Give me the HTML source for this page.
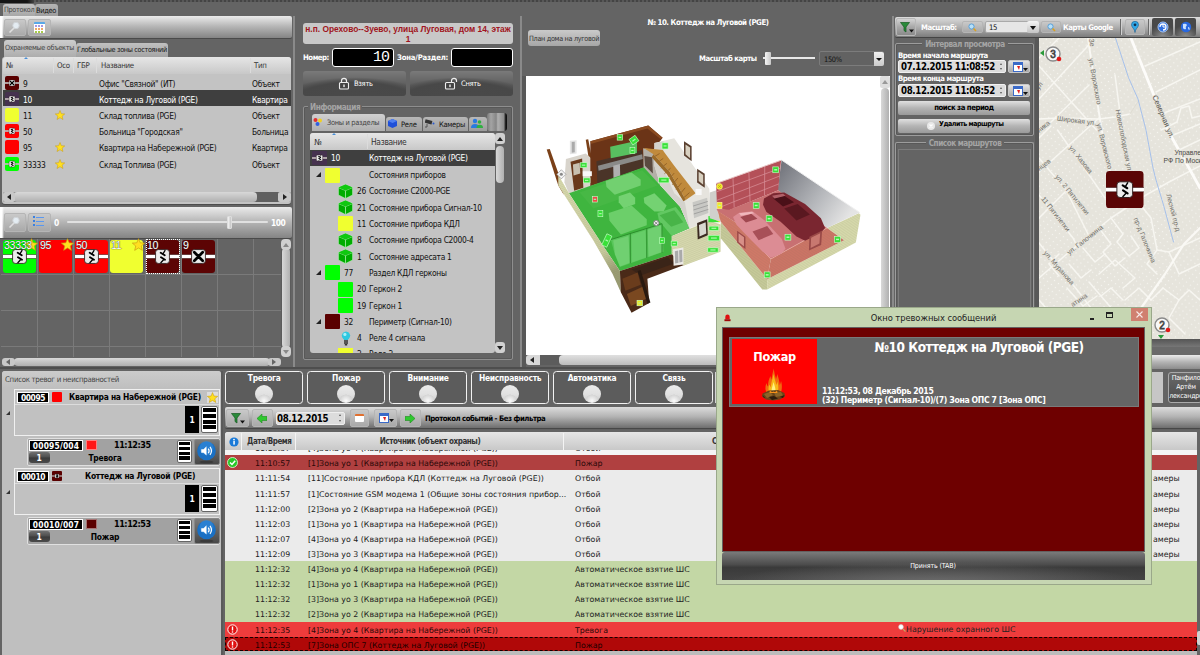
<!DOCTYPE html>
<html lang="ru"><head><meta charset="utf-8"><title>АРМ</title>
<style>
*{box-sizing:border-box;margin:0;padding:0}
html,body{width:1200px;height:655px;overflow:hidden;background:#646464}
body{position:relative;font:8.4px "DejaVu Sans Condensed","Liberation Sans",sans-serif;letter-spacing:-.3px;color:#111;line-height:1}
.a{position:absolute;white-space:nowrap}
.b{font-weight:bold;letter-spacing:-.45px}
.w{color:#fff}
.bs{font-size:7.7px}
.vd{font:7.85px "DejaVu Sans","Liberation Sans",sans-serif;letter-spacing:0}
.ar{font-family:"Liberation Sans",sans-serif;letter-spacing:0}
.btn{border:1px solid #b5b5b5;border-radius:2px;background:linear-gradient(#c9c9c9,#a9a9a9)}
.dk{background:linear-gradient(#707070,#4d4d4d 48%,#3a3a3a 52%,#4a4a4a);border-radius:3px}
.th{border-radius:3px 3px 0 0}
.lt{background:linear-gradient(#ececec,#b9b9b9 50%,#8a8a8a)}
.hd{background:linear-gradient(#e6e6e6,#c8c8c8)}
.sbh{background:linear-gradient(#d8d8d8,#b0b0b0);border-radius:4px}
.sbv{background:linear-gradient(90deg,#d8d8d8,#b0b0b0);border-radius:4px}
</style></head><body>
<div class="a " style="left:0px;top:0px;width:1200px;height:2px;background:repeating-linear-gradient(90deg,#444 0 2px,#585858 2px 4px)"></div>
<div class="a " style="left:0px;top:0px;width:34px;height:3px;background:linear-gradient(90deg,#151515 80%,#444)"></div>
<div class="a th" style="left:3px;top:4px;width:32px;height:13px;background:linear-gradient(#c4c4c4,#a4a4a4)"></div>
<div class="a " style="left:4px;top:6px;color:#444;font-size:7.2px">Протокол</div>
<div class="a th" style="left:35px;top:4px;width:23px;height:13px;background:linear-gradient(#b4b4b4,#9c9c9c)"></div>
<div class="a " style="left:36px;top:7px;font-size:7.4px">Видео</div>
<div class="a " style="left:0px;top:16px;width:292px;height:22px;background:linear-gradient(90deg,#fff 0,#fff 2px,rgba(255,255,255,0) 4px),linear-gradient(#ebebeb,#b5b5b5 48%,#848484);border-radius:0 2px 2px 0;box-shadow:0 1px 0 #4a4a4a"></div>
<div class="a btn" style="left:4px;top:19px;width:22px;height:17px;"></div>
<div class="a btn" style="left:28px;top:19px;width:23px;height:17px;"></div>
<svg class="a" style="left:8px;top:21px" width="13" height="13" viewBox="0 0 13 13"><path d="M6 7 L1.5 11.5" stroke="#e0e0e0" stroke-width="1.6"/><circle cx="8" cy="4.5" r="3.2" fill="#e4ecf2" stroke="#d0d4d8" stroke-width="1"/></svg>
<div class="a " style="left:34px;top:22px;width:11px;height:11px;background:#fff;border-top:2px solid #58a8e8;border-radius:1px"><div style="margin:1px 1px 0;height:2px;background:repeating-linear-gradient(90deg,#a898e0 0 2px,#fff 2px 3px)"></div><div style="margin:1px 1px 0;height:2px;background:repeating-linear-gradient(90deg,#f0a868 0 2px,#fff 2px 3px)"></div><div style="margin:1px 1px 0;height:2px;background:repeating-linear-gradient(90deg,#a8cc48 0 2px,#fff 2px 3px)"></div></div>
<div class="a th" style="left:4px;top:40px;width:72px;height:17px;background:linear-gradient(#cdcdcd,#adadad)"></div>
<div class="a " style="left:5px;top:44px;color:#444;font-size:7.2px">Охраняемые объекты</div>
<div class="a th" style="left:76px;top:43px;width:92px;height:14px;background:linear-gradient(#c0c0c0,#a4a4a4)"></div>
<div class="a " style="left:77px;top:46px;font-size:7.2px">Глобальные зоны состояний</div>
<div class="a " style="left:2px;top:57px;width:289px;height:147px;background:#c3c3c3;border-radius:3px;box-shadow:0 1px 0 #4c4c4c"></div>
<div class="a hd" style="left:3px;top:57px;width:288px;height:17px;border-radius:3px 3px 0 0"></div>
<div class="a " style="left:53px;top:58px;width:1px;height:15px;background:#dcdcdc"></div>
<div class="a " style="left:73px;top:58px;width:1px;height:15px;background:#dcdcdc"></div>
<div class="a " style="left:96px;top:58px;width:1px;height:15px;background:#dcdcdc"></div>
<div class="a " style="left:250px;top:58px;width:1px;height:15px;background:#dcdcdc"></div>
<div class="a " style="left:6px;top:62px;color:#333;font-size:7.8px">№</div>
<div class="a " style="left:57px;top:62px;color:#333;font-size:7.8px">Осо</div>
<div class="a " style="left:77px;top:62px;color:#333;font-size:7.8px">ГБР</div>
<div class="a " style="left:101px;top:62px;color:#333;font-size:7.8px">Название</div>
<div class="a " style="left:254px;top:62px;color:#333;font-size:7.8px">Тип</div>
<div class="a " style="left:24px;top:57px;width:0px;height:0px;border:2px solid transparent;border-bottom:2px solid #4a90d8;border-top:0"></div>
<div class="a " style="left:3px;top:90.4px;width:288px;height:16px;background:#3f3f3f"></div>
<svg class="a" style="left:5px;top:76px" width="14" height="14" viewBox="0 0 14 14"><rect width="14" height="14" rx="2" fill="#5a0000"/><rect x="-1" y="6.19" width="16" height="1.62" fill="#fff" stroke="rgba(40,0,0,.7)" stroke-width="0.35"/><rect x="4.06" y="4.06" width="5.88" height="5.88" rx="1.18" fill="#ececec" stroke="#2a1a1a" stroke-width="0.40"/><path d="M5.24 5.24 L8.76 8.76 M8.76 5.24 L5.24 8.76" stroke="#000" stroke-width="1.18" stroke-linecap="round"/></svg>
<div class="a " style="left:23px;top:80px;">9</div>
<div class="a " style="left:99px;top:80px;">Офис "Связной" (ИТ)</div>
<div class="a " style="left:252px;top:80px;">Объект</div>
<svg class="a" style="left:5px;top:92px" width="14" height="14" viewBox="0 0 14 14"><rect width="14" height="14" rx="2" fill="#46324f"/><rect x="-1" y="6.19" width="16" height="1.62" fill="#fff" stroke="rgba(40,0,0,.7)" stroke-width="0.35"/><rect x="4.06" y="4.06" width="5.88" height="5.88" rx="1.18" fill="#ececec" stroke="#2a1a1a" stroke-width="0.40"/><path d="M8.18 4.30 L7.06 6.12 M7.65 8.18 L6.18 9.76" fill="none" stroke="#000" stroke-width="0.70"/><path d="M6.24 5.41 L7.94 6.47 M6.35 7.29 L8.06 8.41" fill="none" stroke="#000" stroke-width="1.05" stroke-linecap="round"/></svg>
<div class="a " style="left:23px;top:96px;color:#fff">10</div>
<div class="a " style="left:99px;top:96px;color:#fff">Коттедж на Луговой (PGE)</div>
<div class="a " style="left:252px;top:96px;color:#fff">Квартира</div>
<svg class="a" style="left:5px;top:108px" width="14" height="14" viewBox="0 0 14 14"><rect width="14" height="14" rx="2" fill="#f0ff30"/></svg>
<div class="a " style="left:23px;top:112px;">11</div>
<svg class="a" style="left:55px;top:110px" width="10" height="10" viewBox="0 0 20 20"><path d="M10 1 L12.6 7.4 L19.5 7.9 L14.2 12.3 L15.9 19 L10 15.3 L4.1 19 L5.8 12.3 L0.5 7.9 L7.4 7.4 Z" fill="#ffe020" stroke="#c89a10" stroke-width="1"/></svg>
<div class="a " style="left:99px;top:112px;">Склад топлива (PGE)</div>
<div class="a " style="left:252px;top:112px;">Объект</div>
<svg class="a" style="left:5px;top:124px" width="14" height="14" viewBox="0 0 14 14"><rect width="14" height="14" rx="2" fill="#ff0000"/><rect x="-1" y="6.19" width="16" height="1.62" fill="#fff" stroke="rgba(40,0,0,.7)" stroke-width="0.35"/><rect x="4.06" y="4.06" width="5.88" height="5.88" rx="1.18" fill="#ececec" stroke="#2a1a1a" stroke-width="0.40"/><path d="M8.18 4.30 L7.06 6.12 M7.65 8.18 L6.18 9.76" fill="none" stroke="#000" stroke-width="0.70"/><path d="M6.24 5.41 L7.94 6.47 M6.35 7.29 L8.06 8.41" fill="none" stroke="#000" stroke-width="1.05" stroke-linecap="round"/></svg>
<div class="a " style="left:23px;top:128px;">50</div>
<div class="a " style="left:99px;top:128px;">Больница "Городская"</div>
<div class="a " style="left:252px;top:128px;">Больница</div>
<svg class="a" style="left:5px;top:140px" width="14" height="14" viewBox="0 0 14 14"><rect width="14" height="14" rx="2" fill="#ff0000"/></svg>
<div class="a " style="left:23px;top:144px;">95</div>
<svg class="a" style="left:55px;top:142px" width="10" height="10" viewBox="0 0 20 20"><path d="M10 1 L12.6 7.4 L19.5 7.9 L14.2 12.3 L15.9 19 L10 15.3 L4.1 19 L5.8 12.3 L0.5 7.9 L7.4 7.4 Z" fill="#ffe020" stroke="#c89a10" stroke-width="1"/></svg>
<div class="a " style="left:99px;top:144px;">Квартира на Набережной (PGE)</div>
<div class="a " style="left:252px;top:144px;">Квартира</div>
<svg class="a" style="left:5px;top:157px" width="14" height="14" viewBox="0 0 14 14"><rect width="14" height="14" rx="2" fill="#00ff00"/><rect x="-1" y="6.19" width="16" height="1.62" fill="#fff" stroke="rgba(40,0,0,.7)" stroke-width="0.35"/><rect x="4.06" y="4.06" width="5.88" height="5.88" rx="1.18" fill="#ececec" stroke="#2a1a1a" stroke-width="0.40"/><path d="M8.18 4.30 L7.06 6.12 M7.65 8.18 L6.18 9.76" fill="none" stroke="#000" stroke-width="0.70"/><path d="M6.24 5.41 L7.94 6.47 M6.35 7.29 L8.06 8.41" fill="none" stroke="#000" stroke-width="1.05" stroke-linecap="round"/></svg>
<div class="a " style="left:23px;top:161px;">33333</div>
<svg class="a" style="left:55px;top:159px" width="10" height="10" viewBox="0 0 20 20"><path d="M10 1 L12.6 7.4 L19.5 7.9 L14.2 12.3 L15.9 19 L10 15.3 L4.1 19 L5.8 12.3 L0.5 7.9 L7.4 7.4 Z" fill="#ffe020" stroke="#c89a10" stroke-width="1"/></svg>
<div class="a " style="left:99px;top:161px;">Склад Топлива (PGE)</div>
<div class="a " style="left:252px;top:161px;">Объект</div>
<div class="a " style="left:3px;top:192px;width:288px;height:10px;background:#606060;border-radius:2px"></div>
<div class="a sbh" style="left:13px;top:192px;width:244px;height:10px;"></div>
<div class="a " style="left:3px;top:192px;width:12px;height:10px;background:#c8c8c8;border-radius:2px"></div>
<div class="a " style="left:278px;top:192px;width:13px;height:10px;background:#c8c8c8;border-radius:2px"></div>
<div class="a " style="left:7px;top:194px;width:0px;height:0px;border:3px solid transparent;border-right:4px solid #222;border-left:0"></div>
<div class="a " style="left:283px;top:194px;width:0px;height:0px;border:3px solid transparent;border-left:4px solid #222;border-right:0"></div>
<div class="a " style="left:0px;top:207px;width:292px;height:31px;background:linear-gradient(90deg,#fff 0,#fff 2px,rgba(255,255,255,0) 4px),linear-gradient(#ebebeb,#b5b5b5 48%,#848484);border-radius:0 2px 2px 0;box-shadow:0 1px 0 #4a4a4a"></div>
<div class="a btn" style="left:4px;top:213px;width:22px;height:19px;"></div>
<div class="a btn" style="left:28px;top:213px;width:23px;height:19px;"></div>
<svg class="a" style="left:8px;top:216px" width="13" height="13" viewBox="0 0 13 13"><path d="M6 7 L1.5 11.5" stroke="#e0e0e0" stroke-width="1.6"/><circle cx="8" cy="4.5" r="3.2" fill="#e4ecf2" stroke="#d0d4d8" stroke-width="1"/></svg>
<div class="a " style="left:33px;top:216px;width:2px;height:2px;background:#3a80e0"></div>
<div class="a " style="left:36px;top:216.5px;width:8px;height:1.5px;background:#5a98f0"></div>
<div class="a " style="left:33px;top:220px;width:2px;height:2px;background:#3a80e0"></div>
<div class="a " style="left:36px;top:220.5px;width:8px;height:1.5px;background:#5a98f0"></div>
<div class="a " style="left:33px;top:224px;width:2px;height:2px;background:#3a80e0"></div>
<div class="a " style="left:36px;top:224.5px;width:8px;height:1.5px;background:#5a98f0"></div>
<div class="a b" style="left:54px;top:219px;color:#fff">0</div>
<div class="a " style="left:67px;top:221px;width:201px;height:2px;background:#e0e0e0;border-radius:1px"></div>
<div class="a " style="left:227px;top:216px;width:5px;height:13px;background:linear-gradient(90deg,#f4f4f4,#c4c4c4);border-radius:1px;border:1px solid #ddd"></div>
<div class="a b" style="left:271px;top:219px;color:#fff">100</div>
<div class="a " style="left:37px;top:239px;width:1px;height:118px;background:#7a7a7a"></div>
<div class="a " style="left:73px;top:239px;width:1px;height:118px;background:#7a7a7a"></div>
<div class="a " style="left:109px;top:239px;width:1px;height:118px;background:#7a7a7a"></div>
<div class="a " style="left:145px;top:239px;width:1px;height:118px;background:#7a7a7a"></div>
<div class="a " style="left:181px;top:239px;width:1px;height:118px;background:#7a7a7a"></div>
<div class="a " style="left:217px;top:239px;width:1px;height:118px;background:#7a7a7a"></div>
<div class="a " style="left:253px;top:239px;width:1px;height:118px;background:#7a7a7a"></div>
<div class="a " style="left:1px;top:274px;width:280px;height:1px;background:#7a7a7a"></div>
<div class="a " style="left:1px;top:310px;width:280px;height:1px;background:#7a7a7a"></div>
<div class="a " style="left:1px;top:346px;width:280px;height:1px;background:#7a7a7a"></div>
<svg class="a" style="left:3px;top:240px" width="33" height="33" viewBox="0 0 33 33"><rect width="33" height="33" rx="3" fill="#00ff00"/><rect x="-1" y="14.59" width="35" height="3.83" fill="#fff" stroke="rgba(40,0,0,.7)" stroke-width="0.66"/><rect x="9.57" y="9.57" width="13.86" height="13.86" rx="2.77" fill="#ececec" stroke="#2a1a1a" stroke-width="0.83"/><path d="M19.27 10.12 L16.64 14.42 M18.02 19.27 L14.56 23.01" fill="none" stroke="#000" stroke-width="1.25"/><path d="M14.70 12.76 L18.72 15.25 M14.98 17.19 L18.99 19.83" fill="none" stroke="#000" stroke-width="1.87" stroke-linecap="round"/></svg>
<svg class="a" style="left:25px;top:238px" width="13" height="13" viewBox="0 0 20 20"><path d="M10 1 L12.6 7.4 L19.5 7.9 L14.2 12.3 L15.9 19 L10 15.3 L4.1 19 L5.8 12.3 L0.5 7.9 L7.4 7.4 Z" fill="#ffe020" stroke="#c89a10" stroke-width="1"/></svg>
<div class="a ar" style="left:4px;top:240px;color:#fff;font-size:10.6px;letter-spacing:-.3px;text-shadow:0 0 1px #333,0 0 1px #333">33333</div>
<svg class="a" style="left:39px;top:240px" width="33" height="33" viewBox="0 0 33 33"><rect width="33" height="33" rx="3" fill="#ff0000"/></svg>
<svg class="a" style="left:61px;top:238px" width="13" height="13" viewBox="0 0 20 20"><path d="M10 1 L12.6 7.4 L19.5 7.9 L14.2 12.3 L15.9 19 L10 15.3 L4.1 19 L5.8 12.3 L0.5 7.9 L7.4 7.4 Z" fill="#ffe020" stroke="#c89a10" stroke-width="1"/></svg>
<div class="a ar" style="left:40px;top:240px;color:#fff;font-size:10.6px;letter-spacing:-.3px;text-shadow:0 0 1px #333,0 0 1px #333">95</div>
<svg class="a" style="left:75px;top:240px" width="33" height="33" viewBox="0 0 33 33"><rect width="33" height="33" rx="3" fill="#ff0000"/><rect x="-1" y="14.59" width="35" height="3.83" fill="#fff" stroke="rgba(40,0,0,.7)" stroke-width="0.66"/><rect x="9.57" y="9.57" width="13.86" height="13.86" rx="2.77" fill="#ececec" stroke="#2a1a1a" stroke-width="0.83"/><path d="M19.27 10.12 L16.64 14.42 M18.02 19.27 L14.56 23.01" fill="none" stroke="#000" stroke-width="1.25"/><path d="M14.70 12.76 L18.72 15.25 M14.98 17.19 L18.99 19.83" fill="none" stroke="#000" stroke-width="1.87" stroke-linecap="round"/></svg>
<div class="a ar" style="left:76px;top:240px;color:#fff;font-size:10.6px;letter-spacing:-.3px;text-shadow:0 0 1px #333,0 0 1px #333">50</div>
<svg class="a" style="left:110px;top:240px" width="33" height="33" viewBox="0 0 33 33"><rect width="33" height="33" rx="3" fill="#f0ff30"/></svg>
<svg class="a" style="left:132px;top:238px" width="13" height="13" viewBox="0 0 20 20"><path d="M10 1 L12.6 7.4 L19.5 7.9 L14.2 12.3 L15.9 19 L10 15.3 L4.1 19 L5.8 12.3 L0.5 7.9 L7.4 7.4 Z" fill="#ffe020" stroke="#c89a10" stroke-width="1"/></svg>
<div class="a ar" style="left:111px;top:240px;color:#fff;font-size:10.6px;letter-spacing:-.3px;text-shadow:0 0 1px #333,0 0 1px #333">11</div>
<svg class="a" style="left:146px;top:240px" width="33" height="33" viewBox="0 0 33 33"><rect width="33" height="33" rx="3" fill="#5c0404"/><rect x="-1" y="14.59" width="35" height="3.83" fill="#fff" stroke="rgba(40,0,0,.7)" stroke-width="0.66"/><rect x="9.57" y="9.57" width="13.86" height="13.86" rx="2.77" fill="#ececec" stroke="#2a1a1a" stroke-width="0.83"/><path d="M19.27 10.12 L16.64 14.42 M18.02 19.27 L14.56 23.01" fill="none" stroke="#000" stroke-width="1.25"/><path d="M14.70 12.76 L18.72 15.25 M14.98 17.19 L18.99 19.83" fill="none" stroke="#000" stroke-width="1.87" stroke-linecap="round"/></svg>
<div class="a ar" style="left:147px;top:240px;color:#fff;font-size:10.6px;letter-spacing:-.3px;text-shadow:0 0 1px #333,0 0 1px #333">10</div>
<svg class="a" style="left:182px;top:240px" width="33" height="33" viewBox="0 0 33 33"><rect width="33" height="33" rx="3" fill="#5c0404"/><rect x="-1" y="14.59" width="35" height="3.83" fill="#fff" stroke="rgba(40,0,0,.7)" stroke-width="0.66"/><rect x="9.57" y="9.57" width="13.86" height="13.86" rx="2.77" fill="#ececec" stroke="#2a1a1a" stroke-width="0.83"/><path d="M12.34 12.34 L20.66 20.66 M20.66 12.34 L12.34 20.66" stroke="#000" stroke-width="2.77" stroke-linecap="round"/></svg>
<div class="a ar" style="left:183px;top:240px;color:#fff;font-size:10.6px;letter-spacing:-.3px;text-shadow:0 0 1px #333,0 0 1px #333">9</div>
<div class="a " style="left:146px;top:239px;width:34px;height:35px;border:1px dotted #fff"></div>
<div class="a " style="left:281px;top:239px;width:10px;height:118px;background:#5c5c5c;border-radius:4px"></div>
<div class="a sbv" style="left:282px;top:248px;width:8px;height:100px;"></div>
<div class="a " style="left:281px;top:239px;width:10px;height:11px;background:#d0d0d0;border-radius:4px"></div>
<div class="a " style="left:281px;top:346px;width:10px;height:11px;background:#d0d0d0;border-radius:4px"></div>
<div class="a " style="left:283px;top:243px;width:0px;height:0px;border:3px solid transparent;border-bottom:4px solid #888;border-top:0"></div>
<div class="a " style="left:283px;top:350px;width:0px;height:0px;border:3px solid transparent;border-top:4px solid #888;border-bottom:0"></div>
<div class="a " style="left:2px;top:358px;width:279px;height:8px;background:#5c5c5c;border-radius:3px"></div>
<div class="a sbh" style="left:14px;top:358px;width:256px;height:8px;"></div>
<div class="a " style="left:2px;top:358px;width:13px;height:8px;background:#c8c8c8;border-radius:3px"></div>
<div class="a " style="left:268px;top:358px;width:13px;height:8px;background:#c8c8c8;border-radius:3px"></div>
<div class="a " style="left:6px;top:359px;width:0px;height:0px;border:3px solid transparent;border-right:4px solid #666;border-left:0"></div>
<div class="a " style="left:272px;top:359px;width:0px;height:0px;border:3px solid transparent;border-left:4px solid #666;border-right:0"></div>
<div class="a " style="left:293px;top:16px;width:2px;height:351px;background:#8a8a8a"></div>
<div class="a " style="left:303px;top:23px;width:210px;height:21px;background:#c8c8c8;border-radius:3px"></div>
<div class="a ar" style="left:258px;width:300px;text-align:center;top:25px;color:#a01420;font-weight:bold;font-size:8.4px">н.п. Орехово--Зуево, улица Луговая, дом 14, этаж</div>
<div class="a ar" style="left:258px;width:300px;text-align:center;top:35px;color:#a01420;font-weight:bold;font-size:8.4px">1</div>
<div class="a b w bs" style="left:303px;top:54px;">Номер:</div>
<div class="a " style="left:332px;top:48px;width:62px;height:19px;background:#000;border:1px solid #fff;border-radius:3px"></div>
<div class="a " style="left:373px;top:49px;color:#fff;font:15px Liberation Mono,monospace;letter-spacing:-1px">10</div>
<div class="a b w bs" style="left:397px;top:54px;letter-spacing:-.2px">Зона/Раздел:</div>
<div class="a " style="left:451px;top:48px;width:62px;height:19px;background:#000;border:1px solid #fff;border-radius:3px"></div>
<div class="a " style="left:303px;top:71px;width:103px;height:25px;background:radial-gradient(ellipse 75% 100% at 50% 125%,#4a4a4a 0,#484848 80%,rgba(72,72,72,0) 100%),linear-gradient(#7a7a7a,#5c5c5c 60%,#505050);border-radius:3px"></div>
<div class="a " style="left:410px;top:71px;width:103px;height:25px;background:radial-gradient(ellipse 75% 100% at 50% 125%,#4a4a4a 0,#484848 80%,rgba(72,72,72,0) 100%),linear-gradient(#7a7a7a,#5c5c5c 60%,#505050);border-radius:3px"></div>
<svg class="a" style="left:338px;top:77px" width="12" height="13" viewBox="0 0 12 13"><path d="M3.5 6 V3.8 a2.5 2.5 0 0 1 5 0 V6" fill="none" stroke="#eee" stroke-width="1.2"/><rect x="1.5" y="5.5" width="9" height="6.5" rx="1" fill="#444" stroke="#eee" stroke-width="1.1"/><rect x="5.3" y="7.5" width="1.4" height="2.6" fill="#eee"/></svg>
<svg class="a" style="left:444px;top:77px" width="14" height="13" viewBox="0 0 14 13"><path d="M7.5 6 V3.8 a2.5 2.5 0 0 1 5 0 V5" fill="none" stroke="#eee" stroke-width="1.2"/><rect x="1.5" y="5.5" width="9" height="6.5" rx="1" fill="#444" stroke="#eee" stroke-width="1.1"/><rect x="5.3" y="7.5" width="1.4" height="2.6" fill="#eee"/></svg>
<div class="a " style="left:354px;top:80px;color:#fff;font-size:7.5px">Взять</div>
<div class="a " style="left:461px;top:80px;color:#fff;font-size:7.5px">Снять</div>
<div class="a " style="left:303px;top:106px;width:210px;height:254px;border:1px solid #8e8e8e;border-radius:2px;box-shadow:inset 0 0 0 1px #585858"></div>
<div class="a " style="left:308px;top:102px;width:54px;height:9px;background:#646464"></div>
<div class="a b" style="left:310px;top:103px;color:#a4a4a4;font-size:8.1px">Информация</div>
<div class="a th" style="left:312px;top:114px;width:73px;height:17px;background:linear-gradient(#d0d0d0,#b0b0b0)"></div>
<div class="a th" style="left:386px;top:117px;width:36px;height:14px;background:linear-gradient(#b8b8b8,#9c9c9c)"></div>
<div class="a th" style="left:423px;top:117px;width:45px;height:14px;background:linear-gradient(#b8b8b8,#9c9c9c)"></div>
<div class="a th" style="left:469px;top:117px;width:18px;height:14px;background:linear-gradient(#b8b8b8,#9c9c9c)"></div>
<div class="a " style="left:327px;top:119px;color:#444;font-size:7.4px">Зоны и разделы</div>
<div class="a " style="left:401px;top:121px;color:#111;font-size:7.5px">Реле</div>
<div class="a " style="left:439px;top:121px;color:#111;font-size:7.5px">Камеры</div>
<svg class="a" style="left:313px;top:117px" width="10" height="10" viewBox="0 0 10 10"><circle cx="2.5" cy="3" r="2" fill="#e03030"/><circle cx="7" cy="3.5" r="2" fill="#f0d020"/><circle cx="4.5" cy="7" r="2" fill="#3060e0"/></svg>
<svg class="a" style="left:388px;top:119px" width="9" height="9" viewBox="0 0 9 9"><path d="M4.5 0 L9 2 V7 L4.5 9 L0 7 V2Z" fill="#2050d8"/><path d="M4.5 0 L9 2 L4.5 4 L0 2Z" fill="#5080f0"/></svg>
<svg class="a" style="left:425px;top:119px" width="10" height="9" viewBox="0 0 10 9"><rect x="0" y="1" width="7" height="3.5" fill="#333" transform="rotate(15 3 3)"/><path d="M2 5 V8 H0" stroke="#555" fill="none"/><circle cx="8.5" cy="4.5" r="1" fill="#2a5ad0"/></svg>
<svg class="a" style="left:471px;top:118px" width="12" height="11" viewBox="0 0 12 11"><circle cx="4" cy="3" r="2.2" fill="#2a7ae0"/><path d="M0 10 a4 4 0 0 1 8 0Z" fill="#2a7ae0"/><circle cx="8.5" cy="4" r="1.8" fill="#30b040"/><path d="M5.5 10 a3 3 0 0 1 6.5 0Z" fill="#30b040"/></svg>
<div class="a " style="left:487px;top:113px;width:20px;height:18px;background:linear-gradient(90deg,#7a7a7a,#a4a4a4 20%,#868686 46%,#b0b0b0 54%,#8c8c8c 84%,#111 94%);border-radius:3px"></div>
<div class="a " style="left:310px;top:133px;width:185px;height:220px;background:#c3c3c3;border-radius:3px"></div>
<div class="a hd" style="left:310px;top:133px;width:185px;height:17px;border-radius:3px 3px 0 0"></div>
<div class="a " style="left:367px;top:134px;width:1px;height:15px;background:#dcdcdc"></div>
<div class="a " style="left:332px;top:133px;width:0px;height:0px;border:2px solid transparent;border-bottom:2px solid #4a90d8;border-top:0"></div>
<div class="a " style="left:314px;top:138px;color:#333">№</div>
<div class="a " style="left:371px;top:138px;color:#333">Название</div>
<div class="a " style="left:310px;top:150px;width:185px;height:16px;background:#3f3f3f"></div>
<svg class="a" style="left:312px;top:151px" width="15" height="14" viewBox="0 0 15 14"><rect width="15" height="14" rx="1" fill="#46324f"/><rect x="-1" y="6.19" width="17" height="1.62" fill="#fff" stroke="rgba(40,0,0,.7)" stroke-width="0.35"/><rect x="4.35" y="4.06" width="6.30" height="5.88" rx="1.26" fill="#ececec" stroke="#2a1a1a" stroke-width="0.40"/><path d="M8.76 4.30 L7.56 6.12 M8.19 8.18 L6.62 9.76" fill="none" stroke="#000" stroke-width="0.70"/><path d="M6.68 5.41 L8.51 6.47 M6.81 7.29 L8.63 8.41" fill="none" stroke="#000" stroke-width="1.05" stroke-linecap="round"/></svg>
<div class="a " style="left:331px;top:154px;color:#fff">10</div>
<div class="a " style="left:369px;top:154px;color:#fff">Коттедж на Луговой (PGE)</div>
<svg class="a" style="left:316px;top:172px" width="5" height="5" viewBox="0 0 5 5"><path d="M5 0 V5 H0Z" fill="#222"/></svg>
<div class="a " style="left:325px;top:168px;width:15px;height:15px;background:#f0ff30;border-radius:1px"></div>
<div class="a " style="left:344px;top:171px;"></div>
<div class="a " style="left:369px;top:171px;">Состояния приборов</div>
<svg class="a" style="left:338px;top:184px" width="15" height="15" viewBox="0 0 15 15"><path d="M7.5 0.5 L14.5 3.5 V11 L7.5 14.5 L0.5 11 V3.5Z" fill="#00ac00" stroke="#b8f0b8" stroke-width=".5"/><path d="M0.5 3.5 L7.5 6.5 L14.5 3.5 M7.5 6.5 V14.5" fill="none" stroke="#c8f8c8" stroke-width=".7"/><path d="M7.5 0.5 L14.5 3.5 L7.5 6.5 L0.5 3.5Z" fill="#10c810"/></svg>
<div class="a " style="left:357px;top:187px;">26</div>
<div class="a " style="left:369px;top:187px;">Состояние С2000-PGE</div>
<svg class="a" style="left:338px;top:200px" width="15" height="15" viewBox="0 0 15 15"><path d="M7.5 0.5 L14.5 3.5 V11 L7.5 14.5 L0.5 11 V3.5Z" fill="#00ac00" stroke="#b8f0b8" stroke-width=".5"/><path d="M0.5 3.5 L7.5 6.5 L14.5 3.5 M7.5 6.5 V14.5" fill="none" stroke="#c8f8c8" stroke-width=".7"/><path d="M7.5 0.5 L14.5 3.5 L7.5 6.5 L0.5 3.5Z" fill="#10c810"/></svg>
<div class="a " style="left:357px;top:204px;">21</div>
<div class="a " style="left:369px;top:204px;">Состояние прибора Сигнал-10</div>
<div class="a " style="left:338px;top:216px;width:15px;height:15px;background:#f0ff30;border-radius:1px"></div>
<div class="a " style="left:357px;top:220px;">11</div>
<div class="a " style="left:369px;top:220px;">Состояние прибора КДЛ</div>
<svg class="a" style="left:338px;top:233px" width="15" height="15" viewBox="0 0 15 15"><path d="M7.5 0.5 L14.5 3.5 V11 L7.5 14.5 L0.5 11 V3.5Z" fill="#00ac00" stroke="#b8f0b8" stroke-width=".5"/><path d="M0.5 3.5 L7.5 6.5 L14.5 3.5 M7.5 6.5 V14.5" fill="none" stroke="#c8f8c8" stroke-width=".7"/><path d="M7.5 0.5 L14.5 3.5 L7.5 6.5 L0.5 3.5Z" fill="#10c810"/></svg>
<div class="a " style="left:357px;top:236px;">8</div>
<div class="a " style="left:369px;top:236px;">Состояние прибора С2000-4</div>
<svg class="a" style="left:338px;top:249px" width="15" height="15" viewBox="0 0 15 15"><path d="M7.5 0.5 L14.5 3.5 V11 L7.5 14.5 L0.5 11 V3.5Z" fill="#00ac00" stroke="#b8f0b8" stroke-width=".5"/><path d="M0.5 3.5 L7.5 6.5 L14.5 3.5 M7.5 6.5 V14.5" fill="none" stroke="#c8f8c8" stroke-width=".7"/><path d="M7.5 0.5 L14.5 3.5 L7.5 6.5 L0.5 3.5Z" fill="#10c810"/></svg>
<div class="a " style="left:357px;top:253px;">1</div>
<div class="a " style="left:369px;top:253px;">Состояние  адресата 1</div>
<svg class="a" style="left:316px;top:270px" width="5" height="5" viewBox="0 0 5 5"><path d="M5 0 V5 H0Z" fill="#222"/></svg>
<div class="a " style="left:325px;top:265px;width:15px;height:15px;background:#00ff00;border-radius:1px"></div>
<div class="a " style="left:344px;top:269px;">77</div>
<div class="a " style="left:369px;top:269px;">Раздел КДЛ герконы</div>
<div class="a " style="left:338px;top:282px;width:15px;height:15px;background:#00ff00;border-radius:1px"></div>
<div class="a " style="left:357px;top:285px;">20</div>
<div class="a " style="left:369px;top:285px;">Геркон 2</div>
<div class="a " style="left:338px;top:298px;width:15px;height:15px;background:#00ff00;border-radius:1px"></div>
<div class="a " style="left:357px;top:302px;">19</div>
<div class="a " style="left:369px;top:302px;">Геркон 1</div>
<svg class="a" style="left:316px;top:319px" width="5" height="5" viewBox="0 0 5 5"><path d="M5 0 V5 H0Z" fill="#222"/></svg>
<div class="a " style="left:325px;top:314px;width:15px;height:15px;background:#5a0000;border-radius:1px"></div>
<div class="a " style="left:344px;top:318px;">32</div>
<div class="a " style="left:369px;top:318px;">Периметр (Сигнал-10)</div>
<svg class="a" style="left:341px;top:331px" width="10" height="15" viewBox="0 0 10 15"><path d="M5 0.4 L9.4 4.6 L6.8 9 H3.2 L0.6 4.6Z" fill="#28c0d8"/><circle cx="5" cy="4.6" r="3.9" fill="#30c8e0"/><circle cx="3.9" cy="3.4" r="1.6" fill="#a8f0f8"/><rect x="3" y="9" width="4" height="4" fill="#555"/><rect x="3.8" y="13" width="2.4" height="1.5" fill="#333"/></svg>
<div class="a " style="left:357px;top:334px;">4</div>
<div class="a " style="left:369px;top:334px;">Реле 4 сигнала</div>
<div class="a " style="left:338px;top:348px;width:15px;height:5px;background:#f0ff30"></div>
<div class="a" style="left:355px;top:350px;width:80px;height:3px;overflow:hidden"><div class="a" style="left:2px;top:0">2</div><div class="a" style="left:14px;top:0">Реле 2</div></div>
<div class="a " style="left:495px;top:133px;width:10px;height:220px;background:#646464;border-radius:3px"></div>
<div class="a sbv" style="left:496px;top:146px;width:8px;height:37px;"></div>
<div class="a " style="left:495px;top:133px;width:10px;height:11px;background:#d0d0d0;border-radius:3px"></div>
<div class="a " style="left:495px;top:342px;width:10px;height:11px;background:#d0d0d0;border-radius:3px"></div>
<div class="a " style="left:497px;top:137px;width:0px;height:0px;border:3px solid transparent;border-bottom:4px solid #222;border-top:0"></div>
<div class="a " style="left:497px;top:346px;width:0px;height:0px;border:3px solid transparent;border-top:4px solid #222;border-bottom:0"></div>
<div class="a " style="left:520px;top:16px;width:2px;height:351px;background:#8a8a8a"></div>
<div class="a b w" style="left:558px;width:300px;text-align:center;top:19px;font-size:7.85px">№ 10. Коттедж на Луговой (PGE)</div>
<div class="a " style="left:528px;top:30px;width:72px;height:16px;background:linear-gradient(#cacaca,#a6a6a6);border-radius:3px"></div>
<div class="a " style="left:529px;top:35px;color:#333;font-size:7.2px">План дома на луговой</div>
<div class="a b w bs" style="left:699px;top:55px;">Масштаб карты</div>
<div class="a " style="left:763px;top:57px;width:52px;height:2px;background:#e8e8e8"></div>
<div class="a " style="left:765px;top:52px;width:6px;height:13px;background:linear-gradient(90deg,#f4f4f4,#c8c8c8);border-radius:1px"></div>
<div class="a " style="left:819px;top:51px;width:65px;height:15px;background:#626262;border-radius:2px;border:1px solid #7c7c7c"></div>
<div class="a " style="left:874px;top:52px;width:10px;height:14px;background:linear-gradient(#f0f0f0,#cacaca);border-radius:0 2px 2px 0"></div>
<div class="a " style="left:876px;top:58px;width:0px;height:0px;border:3px solid transparent;border-top:3.5px solid #111;border-bottom:0"></div>
<div class="a " style="left:824px;top:56px;font-size:7.4px;color:#111">150%</div>
<div class="a " style="left:522px;top:76px;width:4px;height:291px;background:#585858"></div>
<div class="a " style="left:525.5px;top:76px;width:364px;height:279px;background:#fff"></div>
<div class="a " style="left:880px;top:76px;width:10px;height:279px;background:#fff"></div>
<div class="a sbv" style="left:881px;top:88px;width:8px;height:257px;"></div>
<div class="a " style="left:880px;top:76px;width:10px;height:12px;background:#dedede;border-radius:2px"></div>
<div class="a " style="left:882px;top:80px;width:0px;height:0px;border:3px solid transparent;border-bottom:4px solid #999;border-top:0"></div>
<div class="a " style="left:525.5px;top:355px;width:364px;height:10px;background:#5c5c5c"></div>
<div class="a " style="left:525.5px;top:355px;width:14px;height:10px;background:#d8d8d8;border-radius:3px 0 0 3px"></div>
<div class="a " style="left:559px;top:355px;width:320px;height:10px;border-radius:4px 0 0 4px;background:linear-gradient(#e0e0e0,#bcbcbc)"></div>
<div class="a " style="left:530px;top:357px;width:0px;height:0px;border:3px solid transparent;border-right:4px solid #222;border-left:0"></div>
<svg class="a" style="left:523px;top:76px" width="356" height="278" viewBox="523 76 356 278"><defs><linearGradient id="gw" x1="0" y1="0" x2="1" y2="0.6"><stop offset="0" stop-color="#6c6e76"/><stop offset="0.6" stop-color="#b4b6ba"/><stop offset="1" stop-color="#e4e4e4"/></linearGradient><linearGradient id="lw" x1="0" y1="0" x2="0.3" y2="1"><stop offset="0" stop-color="#d8daae"/><stop offset="0.8" stop-color="#c8ca9e"/><stop offset="1" stop-color="#9a9c74"/></linearGradient><pattern id="sid" width="6" height="6" patternUnits="userSpaceOnUse" patternTransform="rotate(-22)"><rect width="6" height="6" fill="none"/><rect y="0" width="6" height="1.2" fill="rgba(120,120,80,.25)"/></pattern></defs><g transform="translate(540,120) scale(0.30506)"><polygon points="22,97 32,95 64,185 78,245 60,215" fill="#7a4018" /><polygon points="150,65 158,63 170,125 160,128" fill="#7a4018" /><polygon points="85,128 150,110 168,125 168,216 95,241 80,205" fill="#d8d4cc" /><polygon points="100,137 138,126 142,222 112,232" fill="#6a3a1c" /><polygon points="108,146 130,140 132,175 110,182" fill="#c8c0b0" /><polygon points="165,70 355,18 402,58 375,95 342,95 340,156 165,217 165,125" fill="#6b3417" /><polygon points="165,70 355,18 402,58 395,62 352,28 168,78" fill="#8a4a20" /><polygon points="185,135 335,98 340,156 188,209" fill="#4a3428" /><polygon points="190,150 335,112 337,128 192,166" fill="#8a8a88" /><polygon points="240,150 262,144 263,185 241,191" fill="#b0b0b0" /><polygon points="230,88 318,68 318,108 232,125" fill="#58c060" /><polygon points="338,93 378,98 378,150 396,216 340,158" fill="#b4b0a8" /><polygon points="342,118 368,122 370,175 344,150" fill="#5a4a40" /><polygon points="95,240 340,155 395,215 460,285 490,355 432,380 432,440 262,495 212,420" fill="#3fb53f" /><polygon points="130,238 335,165 385,215 175,290" fill="#47b845" /><polygon points="215,200 300,172 330,195 330,215 245,245 218,220" fill="#72d070" /><polygon points="258,250 295,238 312,255 312,275 275,290 258,270" fill="#74d272" /><polygon points="340,255 375,240 415,280 405,300 375,300 342,272" fill="#74d272" /><polygon points="225,305 300,280 350,325 350,345 265,375 228,330" fill="#6ccf6a" /><polygon points="385,305 445,285 490,340 490,355 432,380 390,330" fill="#62c862" /><polygon points="392,312 440,296 470,335 430,350" fill="#48b448" /><polygon points="232,392 400,340 405,432 262,482 245,440" fill="#58c65a" /><polygon points="240,395 290,380 295,468 262,480 246,440" fill="#7ad47a" opacity=".7"/><polygon points="300,377 345,362 350,450 302,466" fill="#6ace6c" opacity=".8"/><polygon points="352,360 398,345 402,432 356,448" fill="#7ad47a" opacity=".7"/><path d="M232 392 L400 340 M296 372 V470 M350 355 V452 M400 340 V435" stroke="#2a8a2a" stroke-width="3" fill="none"/><polygon points="60,180 95,240 212,420 262,495 265,565 238,505 175,395 60,215" fill="url(#lw)" /><polygon points="60,180 95,240 212,420 262,495 265,565 238,505 175,395 60,215" fill="url(#sid)" /><polygon points="375,75 440,60 555,225 560,330 490,355 460,285 395,215 375,150" fill="#e6e4de" /><polygon points="375,75 405,70 405,160 440,240 475,270 490,355 460,285 395,215 375,150" fill="#d4d2cc" /><polygon points="340,92 402,98 440,150 510,240 478,262 425,170 372,112" fill="#c08a3c" /><path d="M392 110 L372 122 M404 126 L384 140 M416 142 L396 158 M428 158 L408 176 M440 174 L422 194 M452 190 L434 212 M464 206 L446 228 M476 222 L458 244 M490 238 L470 256" stroke="#8a5a20" stroke-width="2.5"/><polygon points="372,112 425,170 478,262 470,266 416,178 366,122" fill="#9a6a28" /><polygon points="472,70 497,86 497,135 472,116" fill="#5a4030" /><polygon points="477,80 492,90 492,125 477,112" fill="#d8d0c0" /><polygon points="515,160 540,176 540,222 515,205" fill="#5a4030" /><polygon points="520,170 535,180 535,212 520,200" fill="#d8d0c0" /><polygon points="500,270 548,255 552,305 505,322" fill="#c8c8c4" /><path d="M502 282 L550 267 M503 295 L551 280 M504 308 L552 293" stroke="#888" stroke-width="2"/><polygon points="432,380 555,330 592,342 592,432 470,478 432,442" fill="#d6d8ae" /><polygon points="432,380 555,330 592,342 592,432 470,478 432,442" fill="url(#sid)" /><polygon points="515,338 548,325 550,378 517,392" fill="#3a2a20" /><polygon points="521,344 543,335 545,372 523,382" fill="#d8d8d0" /><polygon points="262,495 432,440 470,476 352,520 358,600 300,632 265,565" fill="#4a2a18" /><polygon points="300,490 420,450 440,470 330,510" fill="#3a2418" /><polygon points="270,520 320,500 330,540 280,560" fill="#6a3c1c" /><polygon points="285,570 340,545 350,585 298,610" fill="#7a4820" /><polygon points="320,495 330,492 362,598 352,602" fill="#2a1a10" /><polygon points="436,424 470,418 470,474 438,478" fill="#eceae6" /><polygon points="442,430 453,428 454,468 443,470" fill="#aaa" /><polygon points="456,427 466,425 467,465 457,467" fill="#aaa" /><polygon points="98,68 120,66 120,110 98,112" fill="#e4e4e4" /><polygon points="104,72 114,71 114,106 104,107" fill="#aaa" /><polygon points="55,178 70,163 85,178 70,193" fill="#f4f4f4" stroke="#888" stroke-width="2"/><circle cx="70" cy="178" r="5" fill="#888"/><polygon points="140,168 170,168 170,184 140,184" fill="#f8f8f8" /><polygon points="510,226 530,226 530,246 510,246" fill="#f8f8f8" /><circle cx="381" cy="338" r="9" fill="#f4f4f4" stroke="#666" stroke-width="2"/><path d="M375 332 L387 344 M387 332 L375 344" stroke="#666" stroke-width="2.5"/><rect x="253.0" y="48.0" width="18" height="18" fill="#38e038" stroke="#c8ffc8" stroke-width="2" transform="rotate(0 262 57)"/><rect x="257.5" y="55" width="9.0" height="4" fill="#a8f8a8" transform="rotate(0 262 57)"/><rect x="296.0" y="55.0" width="24" height="22" fill="#38e038" stroke="#c8ffc8" stroke-width="2" transform="rotate(-35 308 66)"/><rect x="302.0" y="64" width="12.0" height="4" fill="#a8f8a8" transform="rotate(-35 308 66)"/><rect x="295.0" y="90.0" width="16" height="20" fill="#38e038" stroke="#c8ffc8" stroke-width="2" transform="rotate(0 303 100)"/><rect x="299.0" y="98" width="8.0" height="4" fill="#a8f8a8" transform="rotate(0 303 100)"/><rect x="400.0" y="75.0" width="20" height="20" fill="#38e038" stroke="#c8ffc8" stroke-width="2" transform="rotate(0 410 85)"/><rect x="405.0" y="83" width="10.0" height="4" fill="#a8f8a8" transform="rotate(0 410 85)"/><rect x="132.0" y="140.0" width="22" height="16" fill="#38e038" stroke="#c8ffc8" stroke-width="2" transform="rotate(0 143 148)"/><rect x="137.5" y="146" width="11.0" height="4" fill="#a8f8a8" transform="rotate(0 143 148)"/><rect x="142.0" y="190.0" width="22" height="16" fill="#38e038" stroke="#c8ffc8" stroke-width="2" transform="rotate(0 153 198)"/><rect x="147.5" y="196" width="11.0" height="4" fill="#a8f8a8" transform="rotate(0 153 198)"/><rect x="389.0" y="188.0" width="34" height="18" fill="#38e038" stroke="#c8ffc8" stroke-width="2" transform="rotate(0 406 197)"/><rect x="397.5" y="195" width="17.0" height="4" fill="#a8f8a8" transform="rotate(0 406 197)"/><rect x="190.0" y="297.0" width="16" height="20" fill="#38e038" stroke="#c8ffc8" stroke-width="2" transform="rotate(0 198 307)"/><rect x="194.0" y="305" width="8.0" height="4" fill="#a8f8a8" transform="rotate(0 198 307)"/><rect x="210.0" y="375.0" width="18" height="40" fill="#38e038" stroke="#c8ffc8" stroke-width="2" transform="rotate(25 219 395)"/><rect x="214.5" y="393" width="9.0" height="4" fill="#a8f8a8" transform="rotate(25 219 395)"/><rect x="392.0" y="386.0" width="16" height="18" fill="#38e038" stroke="#c8ffc8" stroke-width="2" transform="rotate(0 400 395)"/><rect x="396.0" y="393" width="8.0" height="4" fill="#a8f8a8" transform="rotate(0 400 395)"/><rect x="430.0" y="397.0" width="20" height="16" fill="#38e038" stroke="#c8ffc8" stroke-width="2" transform="rotate(0 440 405)"/><rect x="435.0" y="403" width="10.0" height="4" fill="#a8f8a8" transform="rotate(0 440 405)"/><rect x="554.0" y="348.0" width="32" height="14" fill="#38e038" stroke="#c8ffc8" stroke-width="2" transform="rotate(0 570 355)"/><rect x="562.0" y="353" width="16.0" height="4" fill="#a8f8a8" transform="rotate(0 570 355)"/><rect x="551.0" y="378.0" width="38" height="18" fill="#38e038" stroke="#c8ffc8" stroke-width="2" transform="rotate(0 570 387)"/><rect x="560.5" y="385" width="19.0" height="4" fill="#a8f8a8" transform="rotate(0 570 387)"/><rect x="550.0" y="419.0" width="34" height="14" fill="#38e038" stroke="#c8ffc8" stroke-width="2" transform="rotate(0 567 426)"/><rect x="558.5" y="424" width="17.0" height="4" fill="#a8f8a8" transform="rotate(0 567 426)"/><rect x="172.0" y="251.0" width="16" height="18" fill="#f04848" stroke="#c8ffc8" stroke-width="2" transform="rotate(0 180 260)"/><rect x="176.0" y="258" width="8.0" height="4" fill="#a8f8a8" transform="rotate(0 180 260)"/><rect x="318.0" y="591.0" width="18" height="18" fill="#f0e820" stroke="#c8ffc8" stroke-width="2" transform="rotate(0 327 600)"/><rect x="322.5" y="598" width="9.0" height="4" fill="#a8f8a8" transform="rotate(0 327 600)"/><polygon points="552,315 588,315 588,335 552,335" fill="#38e038" /><polygon points="560,318 590,316 590,336" fill="#f0e820" /></g><g transform="translate(700,140) scale(0.24426)"><polygon points="85,335 275,570 275,612 255,612 85,402" fill="#c6ca9a" /><polygon points="275,570 590,410 520,360 650,300 657,306 638,420 275,612" fill="#d6d9ac" /><polygon points="275,570 590,410 520,360 650,300 657,306 638,420 275,612" fill="url(#sid)" /><polygon points="85,335 275,570 275,612 255,612 85,402" fill="url(#sid)" /><polygon points="40,215 70,205 70,285 85,335 40,320" fill="#d0d0cc" /><polygon points="334,82 654,297 520,360 318,205" fill="url(#gw)" /><path d="M334 82 L654 297" stroke="#f0f0f0" stroke-width="4"/><polygon points="66,178 332,83 320,206 120,288 70,284" fill="#b45058" /><path d="M68 212 L328 116 M69 247 L325 148 M70 280 L322 180 M135 154 L140 278 M200 130 L205 252 M265 107 L264 228" stroke="#d89098" stroke-width="3" fill="none"/><path d="M66 178 L332 83" stroke="#e8c8c8" stroke-width="4"/><polygon points="68,282 120,286 320,206 520,360 290,487 150,340 72,292" fill="#c87072" /><polygon points="72,290 150,340 290,487 275,570 85,335" fill="#d07868" /><polygon points="290,487 520,360 590,410 275,570" fill="#cc7466" /><polygon points="72,290 150,340 290,487 275,570 85,335" fill="url(#sid)" /><polygon points="290,487 520,360 590,410 275,570" fill="url(#sid)" /><path d="M150 340 L290 487 L520 360" stroke="#e8a8a0" stroke-width="3" fill="none"/><polygon points="262,240 300,218 345,215 430,262 495,320 512,360 490,385 430,412 395,395 330,335 272,295 258,265" fill="#7a2630" /><polygon points="300,240 345,228 385,255 340,272" fill="#4a1018" /><polygon points="345,280 400,262 450,305 395,330" fill="#5a1820" /><polygon points="295,228 340,220 350,228 305,240" fill="#b06068" /><polygon points="135,315 160,298 215,292 265,330 335,405 350,445 335,465 290,482 255,455 200,400 150,348" fill="#dc8c94" /><polygon points="165,315 210,302 235,322 188,338" fill="#a04850" /><polygon points="215,375 275,352 300,385 240,410" fill="#a85058" /><polygon points="160,300 212,294 222,300 168,310" fill="#f0b8bc" /><polygon points="152,372 186,396 186,446 152,420" fill="#9a4a48" /><polygon points="158,382 180,398 180,436 158,418" fill="#d89088" /><polygon points="448,396 500,370 496,430 446,452" fill="#9a4a48" /><polygon points="455,400 492,382 489,424 453,442" fill="#c87870" /><rect x="298.0" y="110.0" width="24" height="24" fill="#38e038" stroke="#c8ffc8" stroke-width="2.5"/><rect x="304.0" y="119" width="12.0" height="6" fill="#b8f8b8"/><rect x="218.0" y="256.0" width="24" height="24" fill="#38e038" stroke="#c8ffc8" stroke-width="2.5"/><rect x="224.0" y="265" width="12.0" height="6" fill="#b8f8b8"/><rect x="271.0" y="310.0" width="24" height="24" fill="#38e038" stroke="#c8ffc8" stroke-width="2.5"/><rect x="277.0" y="319" width="12.0" height="6" fill="#b8f8b8"/><rect x="348.0" y="386.0" width="24" height="24" fill="#38e038" stroke="#c8ffc8" stroke-width="2.5"/><rect x="354.0" y="395" width="12.0" height="6" fill="#b8f8b8"/><rect x="551.0" y="395.0" width="24" height="24" fill="#38e038" stroke="#c8ffc8" stroke-width="2.5"/><rect x="557.0" y="404" width="12.0" height="6" fill="#b8f8b8"/><rect x="263.0" y="540.0" width="24" height="24" fill="#38e038" stroke="#c8ffc8" stroke-width="2.5"/><rect x="269.0" y="549" width="12.0" height="6" fill="#b8f8b8"/><circle cx="80" cy="190" r="12" fill="#f0e820" stroke="#fff8a0" stroke-width="2"/><path d="M73 183 L87 197 M87 183 L73 197" stroke="#b0a010" stroke-width="2.5"/><rect x="70.0" y="255.0" width="20" height="26" fill="#f0e820" stroke="#fff8a0" stroke-width="2.5"/><rect x="75.0" y="265" width="10.0" height="6" fill="#b8f8b8"/></g></svg>
<div class="a " style="left:892px;top:16px;width:2px;height:351px;background:#8a8a8a"></div>
<div class="a " style="left:895px;top:16.5px;width:305px;height:20.5px;background:linear-gradient(#dcdcdc,#b4b4b4 45%,#7c7c7c);border-radius:2px 0 0 2px;box-shadow:0 1px 0 #444"></div>
<div class="a " style="left:896px;top:18px;width:20px;height:18px;background:linear-gradient(#d4d4d4,#a8a8a8 50%,#8a8a8a);border:1px solid #b8b8b8;border-radius:2px"></div>
<svg class="a" style="left:900px;top:22px" width="15" height="11" viewBox="0 0 15 11"><path d="M0.5 0.5 H9.5 L6 5 V10 L4 8.5 V5Z" fill="#2a8a3a" stroke="#155a20" stroke-width=".7"/><path d="M9 7.5 H14 L11.5 10.5Z" fill="#111"/></svg>
<div class="a b w bs" style="left:921px;top:24px;">Масштаб:</div>
<div class="a btn" style="left:962px;top:21px;width:21px;height:12px;"></div>
<div class="a " style="left:985px;top:21px;width:54px;height:12px;background:#e6e6e6;border-radius:2px;border:1px solid #aaa"></div>
<div class="a " style="left:1027px;top:21px;width:12px;height:12px;background:linear-gradient(#f4f4f4,#c4c4c4);border-radius:2px"></div>
<div class="a " style="left:1030px;top:26px;width:0px;height:0px;border:3px solid transparent;border-top:4px solid #111;border-bottom:0"></div>
<div class="a " style="left:989px;top:24px;font-size:7.6px">15</div>
<div class="a btn" style="left:1041px;top:21px;width:20px;height:12px;"></div>
<svg class="a" style="left:968px;top:23px" width="9" height="9" viewBox="0 0 9 9"><circle cx="3.5" cy="3.5" r="2.6" fill="#b8e0f8" stroke="#58a0d8" stroke-width="1"/><path d="M5.5 5.5 L8 8" stroke="#d8a020" stroke-width="1.6"/></svg>
<svg class="a" style="left:1047px;top:23px" width="9" height="9" viewBox="0 0 9 9"><circle cx="3.5" cy="3.5" r="2.6" fill="#b8e0f8" stroke="#58a0d8" stroke-width="1"/><path d="M5.5 5.5 L8 8" stroke="#d8a020" stroke-width="1.6"/></svg>
<div class="a b w bs" style="left:1063px;top:24px;">Карты Google</div>
<div class="a " style="left:1120px;top:19px;width:1px;height:16px;background:#6a6a6a"></div>
<div class="a " style="left:1121px;top:19px;width:1px;height:16px;background:#d0d0d0"></div>
<div class="a btn" style="left:1125px;top:19px;width:20px;height:16px;"></div>
<svg class="a" style="left:1131px;top:21px" width="8" height="12" viewBox="0 0 8 12"><path d="M4 11.5 C4 8 0.5 6.5 0.5 3.8 a3.5 3.5 0 0 1 7 0 C7.5 6.5 4 8 4 11.5Z" fill="#30a8e8" stroke="#105a90" stroke-width=".6"/><circle cx="4" cy="3.8" r="1.4" fill="#103050"/></svg>
<div class="a " style="left:1148px;top:19px;width:1px;height:16px;background:#6a6a6a"></div>
<div class="a " style="left:1149px;top:19px;width:1px;height:16px;background:#d0d0d0"></div>
<div class="a " style="left:1152px;top:17.5px;width:21px;height:18px;background:radial-gradient(ellipse 70% 60% at 50% 100%,#8c8c8c 0,#585858 70%,#484848);border-radius:2px"></div>
<div class="a " style="left:1175px;top:17.5px;width:21px;height:18px;background:radial-gradient(ellipse 70% 60% at 50% 100%,#8c8c8c 0,#585858 70%,#484848);border-radius:2px"></div>
<svg class="a" style="left:1157px;top:21px" width="12" height="12" viewBox="0 0 12 12"><circle cx="6" cy="6" r="5" fill="#3070e0" stroke="#a8c8f8" stroke-width="1"/><path d="M3 6 a3 3 0 1 1 3 3" fill="none" stroke="#fff" stroke-width="1.3"/><path d="M6 3 V6 H8" stroke="#fff" stroke-width="1" fill="none"/></svg>
<svg class="a" style="left:1180px;top:21px" width="12" height="12" viewBox="0 0 12 12"><circle cx="6" cy="6" r="5.2" fill="#2868e0"/><path d="M3 3 Q6 2 7 4 Q5 6 6 8 Q4 9 3 7Z" fill="#c8e0ff"/><path d="M8 6 Q10 6 9.5 9 Q8 9 8 6Z" fill="#c8e0ff"/></svg>
<div class="a " style="left:895px;top:43px;width:139px;height:93px;border:1px solid #9c9c9c;border-radius:2px;box-shadow:inset 0 0 0 1px #585858"></div>
<div class="a " style="left:922px;top:39px;width:86px;height:9px;background:#646464"></div>
<div class="a b" style="left:815px;width:300px;text-align:center;top:40px;color:#a4a4a4;font-size:8.1px">Интервал просмотра</div>
<div class="a b w bs" style="left:898px;top:52px;">Время начала маршрута</div>
<div class="a b w bs" style="left:898px;top:75px;">Время конца маршрута</div>
<div class="a " style="left:898px;top:60px;width:108px;height:13px;background:#dcdcdc;border-radius:2px;border:1px solid #f0f0f0"></div>
<div class="a b" style="left:901px;top:62px;font-size:9.6px;letter-spacing:-.35px;color:#000">07.12.2015 11:08:52</div>
<div class="a " style="left:1000px;top:63px;width:0px;height:0px;border:1.5px solid transparent;border-bottom:2px solid #555;border-top:0"></div>
<div class="a " style="left:1000px;top:68px;width:0px;height:0px;border:1.5px solid transparent;border-top:2px solid #555;border-bottom:0"></div>
<div class="a " style="left:1008px;top:60px;width:22px;height:13px;background:linear-gradient(#e4e4e4,#a8a8a8);border-radius:2px;border:1px solid #c8c8c8"></div>
<svg class="a" style="left:1013px;top:62px" width="15" height="10" viewBox="0 0 15 10"><rect x="0.5" y="0.5" width="9" height="9" fill="#fff" stroke="#3a6ac8" stroke-width="1"/><rect x="0.5" y="0.5" width="9" height="2.5" fill="#3a6ac8"/><path d="M4 4 L7 4 L6 8Z" fill="#e02020"/><path d="M10 6 H15 L12.5 9Z" fill="#111"/></svg>
<div class="a " style="left:898px;top:84px;width:108px;height:13px;background:#dcdcdc;border-radius:2px;border:1px solid #f0f0f0"></div>
<div class="a b" style="left:901px;top:86px;font-size:9.6px;letter-spacing:-.35px;color:#000">08.12.2015 11:08:52</div>
<div class="a " style="left:1000px;top:87px;width:0px;height:0px;border:1.5px solid transparent;border-bottom:2px solid #555;border-top:0"></div>
<div class="a " style="left:1000px;top:92px;width:0px;height:0px;border:1.5px solid transparent;border-top:2px solid #555;border-bottom:0"></div>
<div class="a " style="left:1008px;top:84px;width:22px;height:13px;background:linear-gradient(#e4e4e4,#a8a8a8);border-radius:2px;border:1px solid #c8c8c8"></div>
<svg class="a" style="left:1013px;top:86px" width="15" height="10" viewBox="0 0 15 10"><rect x="0.5" y="0.5" width="9" height="9" fill="#fff" stroke="#3a6ac8" stroke-width="1"/><rect x="0.5" y="0.5" width="9" height="2.5" fill="#3a6ac8"/><path d="M4 4 L7 4 L6 8Z" fill="#e02020"/><path d="M10 6 H15 L12.5 9Z" fill="#111"/></svg>
<div class="a " style="left:898px;top:101px;width:132px;height:14px;background:linear-gradient(#e0e0e0,#b4b4b4 50%,#9a9a9a);border-radius:2px"></div>
<div class="a b bs" style="left:814px;width:300px;text-align:center;top:104px;color:#000">поиск за период</div>
<div class="a " style="left:898px;top:119px;width:132px;height:14px;background:linear-gradient(#e0e0e0,#b4b4b4 50%,#9a9a9a);border-radius:2px"></div>
<div class="a b" style="left:939px;top:121px;color:#000;font-size:7px">Удалить маршруты</div>
<svg class="a" style="left:927px;top:122px" width="8" height="8" viewBox="0 0 8 8"><circle cx="4" cy="4" r="4" fill="#e8e8e8"/><path d="M2.5 2.5 L5.5 5.5 M5.5 2.5 L2.5 5.5" stroke="#fff" stroke-width="1.2"/></svg>
<div class="a " style="left:895px;top:142px;width:139px;height:222px;border:1px solid #9c9c9c;border-bottom:0;border-radius:2px;box-shadow:inset 0 0 0 1px #585858"></div>
<div class="a " style="left:926px;top:138px;width:78px;height:9px;background:#646464"></div>
<div class="a b" style="left:815px;width:300px;text-align:center;top:139px;color:#a4a4a4;font-size:8.1px">Список маршрутов</div>
<div class="a " style="left:898px;top:149px;width:133px;height:215px;border:1px solid #7c7c7c;border-bottom:0"></div>
<div class="a " style="left:1035px;top:38px;width:4px;height:326px;background:#585858"></div>
<svg class="a" style="left:1039px;top:38px;letter-spacing:0" width="161" height="301" viewBox="0 0 161 301"><defs><pattern id="dots" width="5" height="5" patternUnits="userSpaceOnUse" patternTransform="rotate(38)"><rect x="1" y="1" width="1.1" height="1.1" fill="#f6f5f0"/></pattern></defs><rect width="161" height="301" fill="#e6e4dc"/><rect width="161" height="301" fill="url(#dots)"/><g fill="none" stroke-linecap="round" stroke-linejoin="round"><path d="M0 28 L31.5 63 L57.5 92" stroke="#f7f6f1" stroke-width="1.5"/><path d="M18.5 92 L55 144 L66 160" stroke="#f7f6f1" stroke-width="1.5"/><path d="M0 120 L27 152 L50 198" stroke="#f7f6f1" stroke-width="1.5"/><path d="M0 157 L34 200 L38 208" stroke="#f7f6f1" stroke-width="1.5"/><path d="M0 205 L39 253 L52 270" stroke="#f7f6f1" stroke-width="1.5"/><path d="M0 61 L47 10 L55 0" stroke="#f7f6f1" stroke-width="1.5"/><path d="M10 86 L50 47" stroke="#f7f6f1" stroke-width="1.5"/><path d="M0 134 L60 80" stroke="#f7f6f1" stroke-width="1.5"/><path d="M0 180 L28 152" stroke="#f7f6f1" stroke-width="1.5"/><path d="M0 100 L12 88" stroke="#f7f6f1" stroke-width="1.5"/><path d="M20 0 L0 20" stroke="#f7f6f1" stroke-width="1.5"/><path d="M106 28 L161 4" stroke="#f7f6f1" stroke-width="1.5"/><path d="M117 54 L161 32" stroke="#f7f6f1" stroke-width="1.5"/><path d="M125 75 L161 61" stroke="#f7f6f1" stroke-width="1.5"/><path d="M132 98 L161 86" stroke="#f7f6f1" stroke-width="1.5"/><path d="M122 92 L138 84 L142 70 L150 68 L153 80 L161 78" stroke="#f7f6f1" stroke-width="1.5"/><path d="M140 112 L161 102" stroke="#f7f6f1" stroke-width="1.5"/><path d="M0 240 L29 215 L72 180 L107 157 L130 144 L161 128" stroke="#f7f6f1" stroke-width="1.5"/><path d="M76 37 L81 75 L89.5 130 L92 142 L96 160" stroke="#f7f6f1" stroke-width="1.5"/><path d="M100 165 L112 180 L118 212 L130 214 L161 200" stroke="#f7f6f1" stroke-width="1.5"/><path d="M92 142 L104 150" stroke="#f7f6f1" stroke-width="1.5"/><path d="M72 180 L84 196 L78 204 L90 218 L100 210 L92 198" stroke="#f7f6f1" stroke-width="1.5"/><path d="M60 190 L72 206 L64 214 L76 228 L86 220" stroke="#f7f6f1" stroke-width="1.5"/><path d="M30 226 L42 240 L52 232 M44 210 L56 224 L66 216 M50 244 L62 258 L72 250 L84 262" stroke="#f7f6f1" stroke-width="1.5"/><path d="M60 236 L76 222 L96 240 L84 250" stroke="#f7f6f1" stroke-width="1.5"/><path d="M86 262 L100 250 L112 262" stroke="#f7f6f1" stroke-width="1.5"/><path d="M28 250 L44 268 L58 258" stroke="#f7f6f1" stroke-width="1.5"/><path d="M118 212 L108 226 L118 236" stroke="#f7f6f1" stroke-width="1.5"/><path d="M130 214 L140 236 L161 226" stroke="#f7f6f1" stroke-width="1.5"/><path d="M124 250 L140 262 L150 252 L161 262" stroke="#f7f6f1" stroke-width="1.5"/><path d="M140 262 L130 280 L146 296" stroke="#f7f6f1" stroke-width="1.5"/><path d="M112 262 L124 250" stroke="#f7f6f1" stroke-width="1.5"/><path d="M52 270 L40 282 M62 258 L74 272 L66 280" stroke="#f7f6f1" stroke-width="1.5"/><path d="M76 150 L70 156 L76 164" stroke="#f7f6f1" stroke-width="1.5"/><path d="M20 216 L10 226 L20 238" stroke="#f7f6f1" stroke-width="1.5"/><path d="M0 262 L14 278" stroke="#f7f6f1" stroke-width="1.5"/><path d="M0 81 L20 80 L60 81 L76 79 L91 76" stroke="#f8f7f2" stroke-width="1.7"/><path d="M91 76 L100 62" stroke="#dddbd0" stroke-width=".8"/><path d="M49 0 L54 35 L60 75 L63.5 96 L72 139 L76 150" stroke="#f9f8f4" stroke-width="1.9"/><path d="M161 190 L145 206 L126 236 L107 263 L88 290 L80 301" stroke="#faf9f5" stroke-width="2.2"/><path d="M91.9 0 L114.4 56 L128.6 92 L150 130 L161 150" stroke="#fdfcfa" stroke-width="2.8"/><path d="M76.5 0 L89.5 39.6 L99 61 L107 92 L114 130 L117 142 L124.5 167 L134.5 204" stroke="#9ebcec" stroke-width=".9"/></g><text x="49.7" y="20.7" transform="rotate(80 49.7 20.7)" font-size="6.8" fill="#716f69" stroke="#e6e4dc" stroke-width="1.6" paint-order="stroke" font-family="Liberation Sans,sans-serif">ул. Воровского</text><text x="17.8" y="82.5" transform="rotate(7 17.8 82.5)" font-size="6.8" fill="#716f69" stroke="#e6e4dc" stroke-width="1.6" paint-order="stroke" font-family="Liberation Sans,sans-serif">Широкая ул.</text><text x="57.6" y="86" transform="rotate(76 57.6 86)" font-size="6.8" fill="#716f69" stroke="#e6e4dc" stroke-width="1.6" paint-order="stroke" font-family="Liberation Sans,sans-serif">ул. Воровского</text><text x="76.6" y="72" transform="rotate(79 76.6 72)" font-size="6.8" fill="#716f69" stroke="#e6e4dc" stroke-width="1.6" paint-order="stroke" font-family="Liberation Sans,sans-serif">Новослободская ул.</text><text x="113.2" y="58.5" transform="rotate(67 113.2 58.5)" font-size="7.4" fill="#55534e" stroke="#e6e4dc" stroke-width="1.6" paint-order="stroke" font-family="Liberation Sans,sans-serif">Северная ул.</text><text x="29.7" y="109.7" transform="rotate(52 29.7 109.7)" font-size="6.8" fill="#716f69" stroke="#e6e4dc" stroke-width="1.6" paint-order="stroke" font-family="Liberation Sans,sans-serif">ул. Хазова</text><text x="16" y="139" transform="rotate(51 16 139)" font-size="6.8" fill="#716f69" stroke="#e6e4dc" stroke-width="1.6" paint-order="stroke" font-family="Liberation Sans,sans-serif">ул. 2 Пятилетки</text><text x="2" y="161" transform="rotate(52 2 161)" font-size="6.8" fill="#716f69" stroke="#e6e4dc" stroke-width="1.6" paint-order="stroke" font-family="Liberation Sans,sans-serif">11 Пятилетки</text><text x="30.2" y="217" transform="rotate(-38 30.2 217)" font-size="6.8" fill="#716f69" stroke="#e6e4dc" stroke-width="1.6" paint-order="stroke" font-family="Liberation Sans,sans-serif">ул. Галочкина</text><text x="4.3" y="215.3" transform="rotate(49 4.3 215.3)" font-size="6.8" fill="#716f69" stroke="#e6e4dc" stroke-width="1.6" paint-order="stroke" font-family="Liberation Sans,sans-serif">ул. Муранова</text><text x="94.6" y="180.7" transform="rotate(68 94.6 180.7)" font-size="6.8" fill="#716f69" stroke="#e6e4dc" stroke-width="1.6" paint-order="stroke" font-family="Liberation Sans,sans-serif">пр-д Галочкина</text><text x="127.3" y="156.5" transform="rotate(75.5 127.3 156.5)" font-size="6.8" fill="#716f69" stroke="#e6e4dc" stroke-width="1.6" paint-order="stroke" font-family="Liberation Sans,sans-serif">Лесной пр-д</text><text x="0.3" y="95" transform="rotate(-40 0.3 95)" font-size="6.8" fill="#716f69" stroke="#e6e4dc" stroke-width="1.6" paint-order="stroke" font-family="Liberation Sans,sans-serif">ника</text><text x="0.3" y="133" transform="rotate(-37 0.3 133)" font-size="6.8" fill="#716f69" stroke="#e6e4dc" stroke-width="1.6" paint-order="stroke" font-family="Liberation Sans,sans-serif">нцев</text><text x="33.8" y="269" transform="rotate(-34 33.8 269)" font-size="6.8" fill="#716f69" stroke="#e6e4dc" stroke-width="1.6" paint-order="stroke" font-family="Liberation Sans,sans-serif">атина</text><text x="0" y="52" transform="rotate(-55 0 52)" font-size="6.8" fill="#716f69" stroke="#e6e4dc" stroke-width="1.6" paint-order="stroke" font-family="Liberation Sans,sans-serif">ул</text><text x="50" y="1" transform="rotate(80 50 1)" font-size="6.8" fill="#716f69" stroke="#e6e4dc" stroke-width="1.6" paint-order="stroke" font-family="Liberation Sans,sans-serif">Зе</text><text x="135.5" y="117" transform="rotate(0 135.5 117)" font-size="6.8" fill="#4a4a46" stroke="#e6e4dc" stroke-width="1.6" paint-order="stroke" font-family="Liberation Sans,sans-serif">Управлен</text><text x="124.6" y="124.8" transform="rotate(0 124.6 124.8)" font-size="6.8" fill="#4a4a46" stroke="#e6e4dc" stroke-width="1.6" paint-order="stroke" font-family="Liberation Sans,sans-serif">РФ По Моск</text></svg>
<svg class="a" style="left:1106px;top:171px" width="37.5" height="37.3" viewBox="0 0 37.5 37.3"><rect width="37.5" height="37.3" rx="3.5" fill="#5a0505"/><rect x="-1" y="16.49" width="39.5" height="4.33" fill="#fff" stroke="rgba(40,0,0,.7)" stroke-width="0.75"/><rect x="10.88" y="10.82" width="15.75" height="15.67" rx="3.15" fill="#ececec" stroke="#2a1a1a" stroke-width="0.93"/><path d="M21.90 11.44 L18.91 16.30 M20.48 21.78 L16.55 26.01" fill="none" stroke="#000" stroke-width="1.42"/><path d="M16.70 14.42 L21.27 17.24 M17.02 19.43 L21.59 22.41" fill="none" stroke="#000" stroke-width="2.13" stroke-linecap="round"/></svg>
<svg class="a" style="left:1045px;top:46px" width="18" height="18" viewBox="0 0 18 18"><circle cx="8" cy="8" r="7" fill="#f8f8f8" stroke="#8a8a8a" stroke-width="1.4"/><circle cx="14" cy="13" r="2.3" fill="#e01818"/><text x="8" y="11.5" text-anchor="middle" font-size="10" font-family="Liberation Sans,sans-serif" fill="#fff" stroke="#444" stroke-width=".8">3</text></svg>
<svg class="a" style="left:1154px;top:317px" width="18" height="18" viewBox="0 0 18 18"><circle cx="8" cy="8" r="7" fill="#f8f8f8" stroke="#8a8a8a" stroke-width="1.4"/><circle cx="14" cy="13" r="2.3" fill="#e01818"/><text x="8" y="11.5" text-anchor="middle" font-size="10" font-family="Liberation Sans,sans-serif" fill="#fff" stroke="#444" stroke-width=".8">2</text></svg>
<div class="a " style="left:1040px;top:50px;width:0px;height:0px;border:3px solid transparent;border-right:4px solid #2a9a3a;border-left:0"></div>
<div class="a " style="left:1158px;top:335px;width:0px;height:0px;border:3px solid transparent;border-top:4px solid #2a9a3a;border-bottom:0"></div>
<div class="a " style="left:1039px;top:339px;width:161px;height:25px;background:#6a6a6a"></div>
<div class="a " style="left:1039px;top:339px;width:161px;height:8px;background:linear-gradient(#555,#777)"></div>
<div class="a " style="left:0px;top:367px;width:1200px;height:2px;background:#4e4e4e"></div>
<div class="a " style="left:2px;top:371px;width:219px;height:284px;background:#bfbfbf;border-radius:3px 3px 0 0"></div>
<div class="a " style="left:2px;top:371px;width:219px;height:17px;background:linear-gradient(#cccccc,#bfbfbf);border-radius:3px 3px 0 0"></div>
<div class="a " style="left:5px;top:376px;color:#444;font-size:7.8px">Список тревог и неисправностей</div>
<div class="a " style="left:14px;top:389px;width:206px;height:47px;background:#c1c1c1;border:1px solid #f0f0f0"></div>
<div class="a " style="left:15px;top:404px;width:204px;height:1px;background:#dcdcdc"></div>
<div class="a " style="left:17px;top:392px;width:32px;height:11px;background:#000;border:1px solid #fff"></div>
<div class="a b" style="left:-117px;width:300px;text-align:center;top:394px;color:#fff">00095</div>
<svg class="a" style="left:52px;top:392px" width="10" height="10" viewBox="0 0 10 10"><rect width="10" height="10" rx="1" fill="#ff0000"/></svg>
<div class="a b" style="left:69px;top:393px;color:#000;letter-spacing:-.25px">Квартира на Набережной (PGE)</div>
<div class="a " style="left:207px;top:392px;width:11px;height:11px;background:#ddd"></div>
<svg class="a" style="left:207px;top:392px" width="11" height="11" viewBox="0 0 20 20"><path d="M10 1 L12.6 7.4 L19.5 7.9 L14.2 12.3 L15.9 19 L10 15.3 L4.1 19 L5.8 12.3 L0.5 7.9 L7.4 7.4 Z" fill="#ffe020" stroke="#c89a10" stroke-width="1"/></svg>
<div class="a " style="left:185px;top:406px;width:14px;height:27px;background:#000"></div>
<div class="a b" style="left:42px;width:300px;text-align:center;top:416px;color:#fff">1</div>
<div class="a" style="left:201px;top:406px;width:17px;height:27px;background:#fff;border-radius:2px;border:1px solid #666"></div>
<div class="a " style="left:203px;top:408.0px;width:13px;height:4.3px;background:#000"></div>
<div class="a " style="left:203px;top:413.8px;width:13px;height:4.3px;background:#000"></div>
<div class="a " style="left:203px;top:419.5px;width:13px;height:4.3px;background:#000"></div>
<div class="a " style="left:203px;top:425.2px;width:13px;height:4.3px;background:#000"></div>
<svg class="a" style="left:6px;top:411px" width="4" height="4" viewBox="0 0 5 5"><path d="M5 0 V5 H0Z" fill="#333"/></svg>
<div class="a " style="left:27px;top:438px;width:193px;height:28px;background:#a2a2a2;border:1px solid #e0e0e0;border-radius:2px"></div>
<div class="a " style="left:29px;top:440px;width:54px;height:11px;background:#000;border:1px solid #fff"></div>
<div class="a b" style="left:-94px;width:300px;text-align:center;top:442px;color:#fff;letter-spacing:.2px">00095/004</div>
<div class="a " style="left:86px;top:440px;width:11px;height:10px;background:#ff1818;border:1px solid rgba(255,255,255,.45)"></div>
<div class="a b" style="left:114px;top:441px;color:#000;font-size:9px">11:12:35</div>
<div class="a dk" style="left:29px;top:452px;width:21px;height:11px;"></div>
<div class="a b" style="left:-111px;width:300px;text-align:center;top:454px;color:#fff">1</div>
<div class="a b" style="left:-45px;width:300px;text-align:center;top:454px;color:#000;letter-spacing:-.2px">Тревога</div>
<div class="a" style="left:177px;top:440px;width:15px;height:23px;background:#fff;border-radius:2px;border:1px solid #666"></div>
<div class="a " style="left:179px;top:442.0px;width:11px;height:3.4px;background:#000"></div>
<div class="a " style="left:179px;top:446.8px;width:11px;height:3.4px;background:#000"></div>
<div class="a " style="left:179px;top:451.5px;width:11px;height:3.4px;background:#000"></div>
<div class="a " style="left:179px;top:456.2px;width:11px;height:3.4px;background:#000"></div>
<div class="a " style="left:194px;top:439px;width:26px;height:26px;background:linear-gradient(#7a7a7a,#585858 70%,#484848);border-radius:2px;border:1px solid #888"></div>
<svg class="a" style="left:196px;top:441px" width="21" height="23.3" viewBox="0 0 18 20"><ellipse cx="9" cy="18" rx="6" ry="1.2" fill="#3a3a3a"/><circle cx="9" cy="8.5" r="8" fill="#1a70c4"/><circle cx="9" cy="6" r="6" fill="#3a90e0" opacity=".5"/><path d="M4.5 7 H6.5 L9 4.5 V12.5 L6.5 10 H4.5Z" fill="#fff"/><path d="M10.5 6.5 Q12 8.5 10.5 10.5 M12 5 Q14.5 8.5 12 12" stroke="#fff" stroke-width="1" fill="none"/></svg>
<div class="a " style="left:14px;top:468px;width:206px;height:47px;background:#c1c1c1;border:1px solid #f0f0f0"></div>
<div class="a " style="left:15px;top:483px;width:204px;height:1px;background:#dcdcdc"></div>
<div class="a " style="left:17px;top:471px;width:32px;height:11px;background:#000;border:1px solid #fff"></div>
<div class="a b" style="left:-117px;width:300px;text-align:center;top:473px;color:#fff">00010</div>
<svg class="a" style="left:52px;top:471px" width="10" height="10" viewBox="0 0 10 10"><rect width="10" height="10" rx="1" fill="#5a0000"/><rect x="-1" y="4.42" width="12" height="1.16" fill="#fff" stroke="rgba(40,0,0,.7)" stroke-width="0.35"/><rect x="2.90" y="2.90" width="4.20" height="4.20" rx="0.84" fill="#ececec" stroke="#2a1a1a" stroke-width="0.40"/><path d="M5.84 3.07 L5.04 4.37 M5.46 5.84 L4.41 6.97" fill="none" stroke="#000" stroke-width="0.70"/><path d="M4.45 3.87 L5.67 4.62 M4.54 5.21 L5.76 6.01" fill="none" stroke="#000" stroke-width="1.05" stroke-linecap="round"/></svg>
<div class="a b" style="left:85px;top:472px;color:#000;letter-spacing:-.25px">Коттедж на Луговой (PGE)</div>
<div class="a " style="left:185px;top:485px;width:14px;height:27px;background:#000"></div>
<div class="a b" style="left:42px;width:300px;text-align:center;top:495px;color:#fff">1</div>
<div class="a" style="left:201px;top:485px;width:17px;height:27px;background:#fff;border-radius:2px;border:1px solid #666"></div>
<div class="a " style="left:203px;top:487.0px;width:13px;height:4.3px;background:#000"></div>
<div class="a " style="left:203px;top:492.8px;width:13px;height:4.3px;background:#000"></div>
<div class="a " style="left:203px;top:498.5px;width:13px;height:4.3px;background:#000"></div>
<div class="a " style="left:203px;top:504.2px;width:13px;height:4.3px;background:#000"></div>
<svg class="a" style="left:6px;top:490px" width="4" height="4" viewBox="0 0 5 5"><path d="M5 0 V5 H0Z" fill="#333"/></svg>
<div class="a " style="left:27px;top:517px;width:193px;height:28px;background:#a2a2a2;border:1px solid #e0e0e0;border-radius:2px"></div>
<div class="a " style="left:29px;top:519px;width:54px;height:11px;background:#000;border:1px solid #fff"></div>
<div class="a b" style="left:-94px;width:300px;text-align:center;top:521px;color:#fff;letter-spacing:.2px">00010/007</div>
<div class="a " style="left:86px;top:519px;width:11px;height:10px;background:#5a0000;border:1px solid rgba(255,255,255,.45)"></div>
<div class="a b" style="left:114px;top:520px;color:#000;font-size:9px">11:12:53</div>
<div class="a dk" style="left:29px;top:531px;width:21px;height:11px;"></div>
<div class="a b" style="left:-111px;width:300px;text-align:center;top:533px;color:#fff">1</div>
<div class="a b" style="left:-45px;width:300px;text-align:center;top:533px;color:#000;letter-spacing:-.2px">Пожар</div>
<div class="a" style="left:177px;top:519px;width:15px;height:23px;background:#fff;border-radius:2px;border:1px solid #666"></div>
<div class="a " style="left:179px;top:521.0px;width:11px;height:3.4px;background:#000"></div>
<div class="a " style="left:179px;top:525.8px;width:11px;height:3.4px;background:#000"></div>
<div class="a " style="left:179px;top:530.5px;width:11px;height:3.4px;background:#000"></div>
<div class="a " style="left:179px;top:535.2px;width:11px;height:3.4px;background:#000"></div>
<div class="a " style="left:194px;top:518px;width:26px;height:26px;background:linear-gradient(#7a7a7a,#585858 70%,#484848);border-radius:2px;border:1px solid #888"></div>
<svg class="a" style="left:196px;top:520px" width="21" height="23.3" viewBox="0 0 18 20"><ellipse cx="9" cy="18" rx="6" ry="1.2" fill="#3a3a3a"/><circle cx="9" cy="8.5" r="8" fill="#1a70c4"/><circle cx="9" cy="6" r="6" fill="#3a90e0" opacity=".5"/><path d="M4.5 7 H6.5 L9 4.5 V12.5 L6.5 10 H4.5Z" fill="#fff"/><path d="M10.5 6.5 Q12 8.5 10.5 10.5 M12 5 Q14.5 8.5 12 12" stroke="#fff" stroke-width="1" fill="none"/></svg>
<div class="a " style="left:225.4px;top:371px;width:77.6px;height:33px;background:#5c5c5c;border:1.5px solid #f2f2f2;border-radius:3.5px"></div>
<div class="a b w" style="left:114.19999999999999px;width:300px;text-align:center;top:374px;letter-spacing:-.25px">Тревога</div>
<div class="a" style="left:255.0px;top:385px;width:18.4px;height:18.4px;border-radius:50%;background:radial-gradient(circle at 50% 88%,#fafafa 0,#d4d4d4 34%,rgba(212,212,212,0) 36%),linear-gradient(#ebebeb,#e0e0e0 55%,#c6c6c6)"></div>
<div class="a " style="left:307.4px;top:371px;width:77.6px;height:33px;background:#5c5c5c;border:1.5px solid #f2f2f2;border-radius:3.5px"></div>
<div class="a b w" style="left:196.2px;width:300px;text-align:center;top:374px;letter-spacing:-.25px">Пожар</div>
<div class="a" style="left:337.0px;top:385px;width:18.4px;height:18.4px;border-radius:50%;background:radial-gradient(circle at 50% 88%,#fafafa 0,#d4d4d4 34%,rgba(212,212,212,0) 36%),linear-gradient(#ebebeb,#e0e0e0 55%,#c6c6c6)"></div>
<div class="a " style="left:389.3px;top:371px;width:77.6px;height:33px;background:#5c5c5c;border:1.5px solid #f2f2f2;border-radius:3.5px"></div>
<div class="a b w" style="left:278.1px;width:300px;text-align:center;top:374px;letter-spacing:-.25px">Внимание</div>
<div class="a" style="left:418.9px;top:385px;width:18.4px;height:18.4px;border-radius:50%;background:radial-gradient(circle at 50% 88%,#fafafa 0,#d4d4d4 34%,rgba(212,212,212,0) 36%),linear-gradient(#ebebeb,#e0e0e0 55%,#c6c6c6)"></div>
<div class="a " style="left:471.2px;top:371px;width:77.6px;height:33px;background:#5c5c5c;border:1.5px solid #f2f2f2;border-radius:3.5px"></div>
<div class="a b w" style="left:360.1px;width:300px;text-align:center;top:374px;letter-spacing:-.25px">Неисправность</div>
<div class="a" style="left:500.9px;top:385px;width:18.4px;height:18.4px;border-radius:50%;background:radial-gradient(circle at 50% 88%,#fafafa 0,#d4d4d4 34%,rgba(212,212,212,0) 36%),linear-gradient(#ebebeb,#e0e0e0 55%,#c6c6c6)"></div>
<div class="a " style="left:553.2px;top:371px;width:77.6px;height:33px;background:#5c5c5c;border:1.5px solid #f2f2f2;border-radius:3.5px"></div>
<div class="a b w" style="left:442.0px;width:300px;text-align:center;top:374px;letter-spacing:-.25px">Автоматика</div>
<div class="a" style="left:582.8px;top:385px;width:18.4px;height:18.4px;border-radius:50%;background:radial-gradient(circle at 50% 88%,#fafafa 0,#d4d4d4 34%,rgba(212,212,212,0) 36%),linear-gradient(#ebebeb,#e0e0e0 55%,#c6c6c6)"></div>
<div class="a " style="left:635.1px;top:371px;width:77.6px;height:33px;background:#5c5c5c;border:1.5px solid #f2f2f2;border-radius:3.5px"></div>
<div class="a b w" style="left:523.9px;width:300px;text-align:center;top:374px;letter-spacing:-.25px">Связь</div>
<div class="a" style="left:664.8px;top:385px;width:18.4px;height:18.4px;border-radius:50%;background:radial-gradient(circle at 50% 88%,#fafafa 0,#d4d4d4 34%,rgba(212,212,212,0) 36%),linear-gradient(#ebebeb,#e0e0e0 55%,#c6c6c6)"></div>
<div class="a " style="left:714.5px;top:372px;width:1px;height:31px;background:#d4d4d4"></div>
<div class="a " style="left:1039px;top:355px;width:161px;height:14px;background:linear-gradient(#ececec,#b4b4b4 50%,#8c8c8c)"></div>
<div class="a " style="left:1151px;top:372px;width:12px;height:31px;background:#c6c6c6"></div>
<div class="a " style="left:1168px;top:372px;width:34px;height:31px;background:linear-gradient(#6a6a6a,#4a4a4a);border:1px solid #aaa;border-radius:3px"></div>
<div class="a " style="left:1036px;width:300px;text-align:center;top:375px;color:#fff;font-size:7px;letter-spacing:-.2px">Панфило</div>
<div class="a " style="left:1036px;width:300px;text-align:center;top:384px;color:#fff;font-size:7px;letter-spacing:-.2px">Артём</div>
<div class="a " style="left:1036px;width:300px;text-align:center;top:393px;color:#fff;font-size:7px;letter-spacing:-.2px">лександро</div>
<div class="a " style="left:225px;top:407px;width:975px;height:21px;background:linear-gradient(#dcdcdc,#b4b4b4 45%,#6e6e6e);border-radius:2px 0 0 2px;box-shadow:0 1px 1px #444"></div>
<div class="a btn" style="left:226px;top:409px;width:23px;height:18px;"></div>
<svg class="a" style="left:231px;top:413px" width="15" height="11" viewBox="0 0 15 11"><path d="M0.5 0.5 H9.5 L6 5 V10 L4 8.5 V5Z" fill="#2a8a3a" stroke="#155a20" stroke-width=".7"/><path d="M9 7.5 H14 L11.5 10.5Z" fill="#111"/></svg>
<div class="a btn" style="left:252px;top:409px;width:21px;height:18px;"></div>
<svg class="a" style="left:257px;top:414px" width="10" height="9" viewBox="0 0 10 9"><path d="M0 4.5 L5 0 V2.5 H10 V6.5 H5 V9Z" fill="#30c830" stroke="#208a20" stroke-width=".6"/></svg>
<div class="a " style="left:276px;top:412px;width:69px;height:13px;background:#dcdcdc;border-radius:2px;border:1px solid #eee"></div>
<div class="a b" style="left:277px;top:414px;font-size:9.6px;letter-spacing:-.35px;color:#000">08.12.2015</div>
<div class="a " style="left:339px;top:414px;width:0px;height:0px;border:1.5px solid transparent;border-bottom:2px solid #555;border-top:0"></div>
<div class="a " style="left:339px;top:420px;width:0px;height:0px;border:1.5px solid transparent;border-top:2px solid #555;border-bottom:0"></div>
<div class="a btn" style="left:350px;top:409px;width:19px;height:18px;"></div>
<div class="a " style="left:355px;top:414px;width:9px;height:8px;background:#fff;border-top:2px solid #e07030;border-radius:1px"></div>
<div class="a btn" style="left:374px;top:409px;width:23px;height:18px;"></div>
<svg class="a" style="left:379px;top:413px" width="15" height="10" viewBox="0 0 15 10"><rect x="0.5" y="0.5" width="9" height="9" fill="#fff" stroke="#3a6ac8" stroke-width="1"/><rect x="0.5" y="0.5" width="9" height="2.5" fill="#3a6ac8"/><path d="M4 4 L7 4 L6 8Z" fill="#e02020"/><path d="M10 6 H15 L12.5 9Z" fill="#111"/></svg>
<div class="a btn" style="left:400px;top:409px;width:21px;height:18px;"></div>
<svg class="a" style="left:405px;top:414px" width="10" height="9" viewBox="0 0 10 9"><path d="M10 4.5 L5 0 V2.5 H0 V6.5 H5 V9Z" fill="#30c830" stroke="#208a20" stroke-width=".6"/></svg>
<div class="a b" style="left:425px;top:415px;color:#000;font-size:7.7px">Протокол событий - Без фильтра</div>
<div class="a " style="left:225px;top:432px;width:973px;height:223px;background:#ebebeb;border-radius:3px 3px 0 0"></div>
<div class="a hd" style="left:225px;top:432px;width:973px;height:18px;border-radius:3px 3px 0 0"></div>
<div class="a " style="left:241px;top:433px;width:1px;height:17px;background:#f4f4f4"></div>
<div class="a " style="left:295px;top:433px;width:1px;height:17px;background:#f4f4f4"></div>
<div class="a " style="left:563px;top:433px;width:1px;height:17px;background:#f4f4f4"></div>
<svg class="a" style="left:229px;top:437px" width="10" height="10" viewBox="0 0 10 10"><circle cx="5" cy="5" r="4.6" fill="#1a7ad8"/><rect x="4.3" y="4" width="1.5" height="3.6" fill="#fff"/><circle cx="5" cy="2.6" r=".9" fill="#fff"/></svg>
<div class="a b" style="left:247px;top:438px;color:#333;font-size:8px">Дата/Время</div>
<div class="a b" style="left:280px;width:300px;text-align:center;top:438px;color:#333;font-size:8px">Источник (объект охраны)</div>
<div class="a b" style="left:712px;top:438px;color:#333;font-size:8px">С</div>
<div class="a " style="left:225px;top:450px;width:973px;height:5px;background:#f4f4f4"></div>
<div class="a" style="left:225px;top:450px;width:973px;height:3px;overflow:hidden"><div class="a" style="left:83px;top:-6px;font:7.85px DejaVu Sans,sans-serif;letter-spacing:0;color:#222">[4]Зона уо 4 (Квартира на Набережной (PGE))</div><div class="a" style="left:30px;top:-6px;font:7.85px DejaVu Sans,sans-serif;letter-spacing:0;color:#222">11:10:57</div><div class="a" style="left:350px;top:-6px;font:7.85px DejaVu Sans,sans-serif;letter-spacing:0;color:#222">Отбой</div></div>
<div class="a " style="left:225px;top:455px;width:972px;height:15px;background:#b04040"></div>
<div class="a vd" style="left:255px;top:459px;color:#2a0808">11:10:57</div>
<div class="a vd" style="left:308px;top:459px;color:#2a0808">[1]Зона уо 1 (Квартира на Набережной (PGE))</div>
<div class="a vd" style="left:575px;top:459px;color:#2a0808">Пожар</div>
<svg class="a" style="left:227px;top:457px" width="11" height="11" viewBox="0 0 11 11"><circle cx="5.5" cy="5.5" r="5" fill="#28c828" stroke="#e8ffe8" stroke-width=".8"/><path d="M3 5.5 L5 7.5 L8.2 3.8" stroke="#fff" stroke-width="1.5" fill="none"/></svg>
<div class="a " style="left:225px;top:470px;width:972px;height:16px;background:#ebebeb"></div>
<div class="a vd" style="left:255px;top:474px;color:#222">11:11:54</div>
<div class="a vd" style="left:308px;top:474px;color:#222">[11]Состояние прибора КДЛ (Коттедж на Луговой (PGE))</div>
<div class="a vd" style="left:575px;top:474px;color:#222">Отбой</div>
<div class="a vd" style="left:1153px;top:474px;color:#222">амеры</div>
<div class="a " style="left:225px;top:486px;width:972px;height:15px;background:#ebebeb"></div>
<div class="a vd" style="left:255px;top:490px;color:#222">11:11:57</div>
<div class="a vd" style="left:308px;top:490px;color:#222">[1]Состояние GSM модема 1 (Общие зоны состояния прибор...</div>
<div class="a vd" style="left:575px;top:490px;color:#222">Отбой</div>
<div class="a vd" style="left:1153px;top:490px;color:#222">амеры</div>
<div class="a " style="left:225px;top:501px;width:972px;height:15px;background:#ebebeb"></div>
<div class="a vd" style="left:255px;top:505px;color:#222">11:12:00</div>
<div class="a vd" style="left:308px;top:505px;color:#222">[2]Зона уо 2 (Квартира на Набережной (PGE))</div>
<div class="a vd" style="left:575px;top:505px;color:#222">Отбой</div>
<div class="a vd" style="left:1153px;top:505px;color:#222">амеры</div>
<div class="a " style="left:225px;top:516px;width:972px;height:15px;background:#ebebeb"></div>
<div class="a vd" style="left:255px;top:520px;color:#222">11:12:03</div>
<div class="a vd" style="left:308px;top:520px;color:#222">[1]Зона уо 1 (Квартира на Набережной (PGE))</div>
<div class="a vd" style="left:575px;top:520px;color:#222">Отбой</div>
<div class="a vd" style="left:1153px;top:520px;color:#222">амеры</div>
<div class="a " style="left:225px;top:531px;width:972px;height:15px;background:#ebebeb"></div>
<div class="a vd" style="left:255px;top:535px;color:#222">11:12:07</div>
<div class="a vd" style="left:308px;top:535px;color:#222">[4]Зона уо 4 (Квартира на Набережной (PGE))</div>
<div class="a vd" style="left:575px;top:535px;color:#222">Отбой</div>
<div class="a vd" style="left:1153px;top:535px;color:#222">амеры</div>
<div class="a " style="left:225px;top:546px;width:972px;height:15px;background:#ebebeb"></div>
<div class="a vd" style="left:255px;top:550px;color:#222">11:12:09</div>
<div class="a vd" style="left:308px;top:550px;color:#222">[3]Зона уо 3 (Квартира на Набережной (PGE))</div>
<div class="a vd" style="left:575px;top:550px;color:#222">Отбой</div>
<div class="a vd" style="left:1153px;top:550px;color:#222">амеры</div>
<div class="a " style="left:225px;top:561px;width:972px;height:15px;background:#c3d7a5"></div>
<div class="a vd" style="left:255px;top:565px;color:#222">11:12:32</div>
<div class="a vd" style="left:308px;top:565px;color:#222">[4]Зона уо 4 (Квартира на Набережной (PGE))</div>
<div class="a vd" style="left:575px;top:565px;color:#222">Автоматическое взятие ШС</div>
<div class="a " style="left:225px;top:576px;width:972px;height:15px;background:#c3d7a5"></div>
<div class="a vd" style="left:255px;top:580px;color:#222">11:12:32</div>
<div class="a vd" style="left:308px;top:580px;color:#222">[1]Зона уо 1 (Квартира на Набережной (PGE))</div>
<div class="a vd" style="left:575px;top:580px;color:#222">Автоматическое взятие ШС</div>
<div class="a " style="left:225px;top:591px;width:972px;height:15px;background:#c3d7a5"></div>
<div class="a vd" style="left:255px;top:595px;color:#222">11:12:32</div>
<div class="a vd" style="left:308px;top:595px;color:#222">[3]Зона уо 3 (Квартира на Набережной (PGE))</div>
<div class="a vd" style="left:575px;top:595px;color:#222">Автоматическое взятие ШС</div>
<div class="a " style="left:225px;top:606px;width:972px;height:16px;background:#c3d7a5"></div>
<div class="a vd" style="left:255px;top:610px;color:#222">11:12:32</div>
<div class="a vd" style="left:308px;top:610px;color:#222">[2]Зона уо 2 (Квартира на Набережной (PGE))</div>
<div class="a vd" style="left:575px;top:610px;color:#222">Автоматическое взятие ШС</div>
<div class="a " style="left:225px;top:622px;width:972px;height:15px;background:#ee3c3c"></div>
<div class="a vd" style="left:255px;top:626px;color:#2a0808">11:12:35</div>
<div class="a vd" style="left:308px;top:626px;color:#2a0808">[4]Зона уо 4 (Квартира на Набережной (PGE))</div>
<div class="a vd" style="left:575px;top:626px;color:#2a0808">Тревога</div>
<svg class="a" style="left:227px;top:624px" width="11" height="11" viewBox="0 0 11 11"><circle cx="5.5" cy="5.5" r="4.7" fill="#e01010" stroke="#fff" stroke-width="1"/><rect x="4.8" y="2.5" width="1.4" height="4" fill="#fff"/><circle cx="5.5" cy="8" r=".8" fill="#fff"/></svg>
<div class="a " style="left:225px;top:637px;width:972px;height:15px;background:#b00808"></div>
<div class="a vd" style="left:255px;top:641px;color:#1c0000">11:12:53</div>
<div class="a vd" style="left:308px;top:641px;color:#1c0000">[7]Зона ОПС 7 (Коттедж на Луговой (PGE))</div>
<div class="a vd" style="left:575px;top:641px;color:#1c0000">Пожар</div>
<svg class="a" style="left:227px;top:639px" width="11" height="11" viewBox="0 0 11 11"><circle cx="5.5" cy="5.5" r="4.7" fill="#e01010" stroke="#fff" stroke-width="1"/><rect x="4.8" y="2.5" width="1.4" height="4" fill="#fff"/><circle cx="5.5" cy="8" r=".8" fill="#fff"/></svg>
<div class="a " style="left:225px;top:636.5px;width:972px;height:14.5px;border:1px dashed #100;background:none"></div>
<div class="a vd" style="left:906px;top:625px;color:#222">Нарушение охранного ШС</div>
<svg class="a" style="left:898px;top:624px" width="8" height="8" viewBox="0 0 8 8"><circle cx="3" cy="3" r="2.4" fill="#fff" stroke="#ccc" stroke-width=".6"/><path d="M5 5 L7.5 7.5" stroke="#c8a060" stroke-width="1.3"/></svg>
<div class="a " style="left:1197px;top:430px;width:3px;height:225px;background:#646464"></div>
<div class="a " style="left:225px;top:651px;width:972px;height:4px;background:#bcbcbc"></div>
<div class="a " style="left:1197px;top:631px;width:3px;height:14px;background:#d0d0d0;border-radius:2px 0 0 2px"></div>
<div class="a " style="left:221px;top:371px;width:2px;height:284px;background:#5a5a5a"></div>
<div class="a " style="left:716px;top:307px;width:436px;height:278px;background:#c6d6b2;border:1px solid #9aa88a"></div>
<div class="a " style="left:783.5px;width:300px;text-align:center;top:313px;color:#222;font-size:9.3px;letter-spacing:-.05px">Окно тревожных сообщений</div>
<svg class="a" style="left:724px;top:313px" width="7" height="9" viewBox="0 0 8 10"><path d="M1.5 7 V4 a2.5 2.5 0 0 1 5 0 V7Z" fill="#e01010"/><rect x="0.5" y="7" width="7" height="2.2" fill="#a00808"/></svg>
<div class="a " style="left:1090px;top:318px;width:4px;height:1.5px;background:#222"></div>
<div class="a " style="left:1106px;top:312px;width:7px;height:6px;border:1px solid #222;border-top-width:2px"></div>
<div class="a " style="left:1131px;top:308px;width:17px;height:13px;background:#d08070"></div>
<svg class="a" style="left:1136px;top:311px" width="7" height="7" viewBox="0 0 7 7"><path d="M0.5 0.5 L6.5 6.5 M6.5 0.5 L0.5 6.5" stroke="#f8e8e8" stroke-width="1.1"/></svg>
<div class="a " style="left:722px;top:327px;width:423px;height:225px;background:#6e0000;border:1.5px solid #646060"></div>
<div class="a " style="left:729px;top:337px;width:410px;height:70px;background:#656565;border:1px solid #7a7a7a"></div>
<div class="a " style="left:732px;top:339px;width:85px;height:65px;background:#ff0000"></div>
<div class="a b" style="left:624.5px;width:300px;text-align:center;top:351px;color:#fff;font-size:12.6px;letter-spacing:-.4px">Пожар</div>
<svg class="a" style="left:761px;top:368px" width="25" height="34" viewBox="0 0 25 34"><path d="M12.8 0.5 C13.3 6 14.5 8 15 11 C15.8 9 16 7.5 16.2 6 C17.5 10 18.5 13 18.8 17 C19.5 15.5 19.8 14.5 20 13 C21.5 18 21 23 19 26 L6.5 26 C4 23 3.8 19 5.5 15 C5.8 16.5 6.2 17.5 7 18.5 C7 14 8 11 9.5 8 C9.6 9.5 9.9 10.5 10.4 11.5 C11 8 11.8 4 12.8 0.5Z" fill="#f06a10"/><path d="M12.7 6 C13.2 11 14.8 13 15.2 17 C15.9 15.8 16.2 14.8 16.4 13.5 C17.8 18 17.8 23 16 26 L9 26 C7 23 7.2 19 8.5 16.5 C8.8 17.8 9.2 18.6 9.8 19.3 C10 15 11.5 11 12.7 6Z" fill="#f8b818"/><path d="M12.6 14 C13.5 18 15 20 14.5 26 L10.5 26 C10 22 11.5 18 12.6 14Z" fill="#fff080"/><path d="M1.5 25.5 L8 22.5 L17 22 L23.5 25 L24 28.5 L19 31.5 L12 32.5 L5 31.5 L1 28.5Z" fill="#6a4418"/><path d="M3 26 L9 24 L12 27 L6 30Z M13 24.5 L20 24 L22 27.5 L15 29Z" fill="#8a6428"/><path d="M8 29 L13 28 L17 30.5 L11 32Z M1.5 27 L4 29.5 L3 30Z M19 29 L23.5 27 L22 30Z" fill="#2e1c0c"/><path d="M9 22.5 C10 24 11.5 24.5 12.5 23.5 C13.5 24.5 15 24.2 16 22.3 L16.5 25 L8.5 25Z" fill="#f89018"/></svg>
<div class="a b" style="left:829px;width:300px;text-align:center;top:341px;color:#fff;font-size:13.5px;letter-spacing:-.5px">№10 Коттедж на Луговой (PGE)</div>
<div class="a b" style="left:822px;top:387px;color:#fff;font-size:8.6px;letter-spacing:-.35px">11:12:53, 08 Декабрь 2015</div>
<div class="a b" style="left:822px;top:396px;color:#fff;font-size:8.6px;letter-spacing:-.35px">(32) Периметр (Сигнал-10)/(7) Зона ОПС 7 [Зона ОПС]</div>
<div class="a " style="left:722px;top:552px;width:423px;height:28px;background:radial-gradient(ellipse 50% 80% at 50% 115%,#707070,rgba(80,80,80,0) 100%),linear-gradient(#7a7a7a,#4c4c4c 45%,#3a3a3a 55%,#444);border-radius:3px 3px 0 0"></div>
<div class="a " style="left:783px;width:300px;text-align:center;top:563px;color:#fff;font-size:7px;letter-spacing:-.1px">Принять (TAB)</div>
</body></html>
